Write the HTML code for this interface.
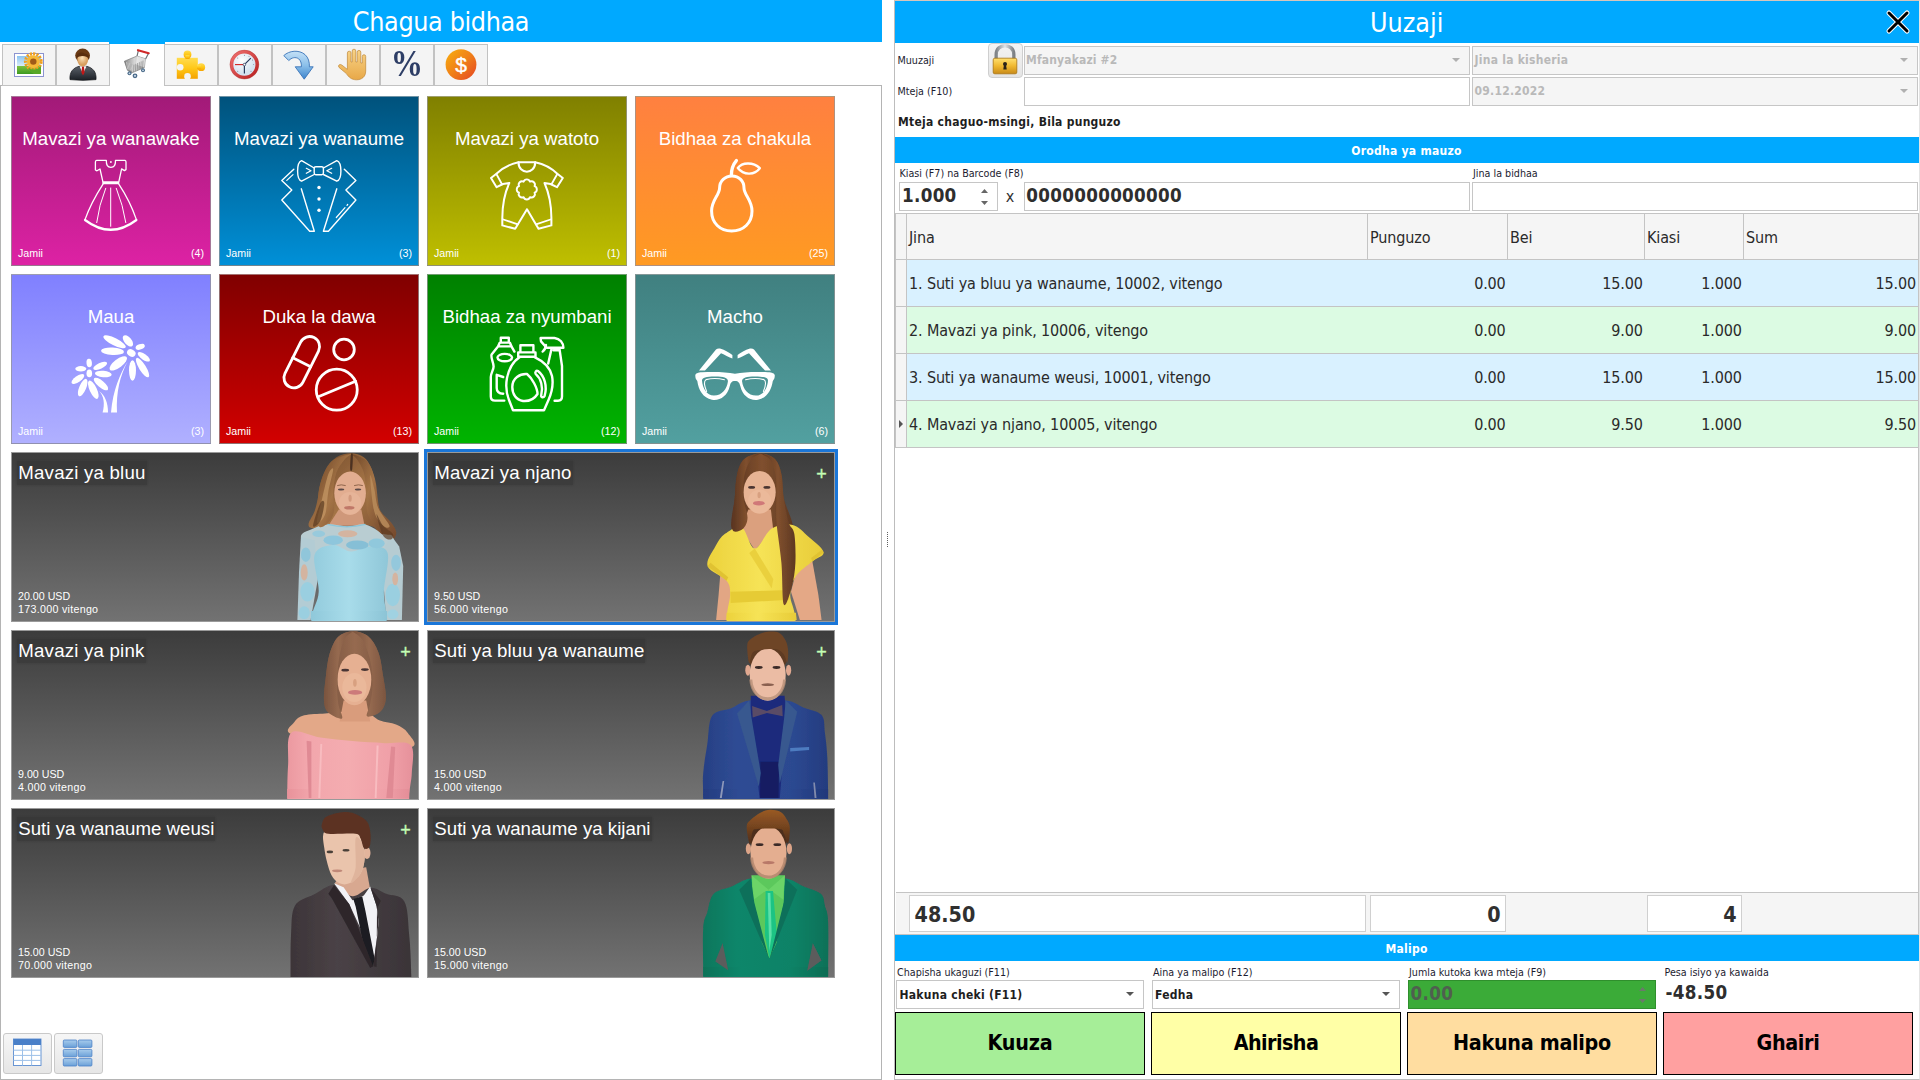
<!DOCTYPE html>
<html lang="sw"><head><meta charset="utf-8"><title>Uuzaji</title>
<style>
html,body{margin:0;padding:0;background:#fff;}
body{width:1920px;height:1080px;position:relative;overflow:hidden;font-family:"DejaVu Sans Condensed","DejaVu Sans","Liberation Sans",sans-serif;}
div{box-sizing:border-box;}
svg{position:absolute;overflow:visible;}
.tile{position:absolute;width:200px;height:170px;border:1px solid rgba(150,150,150,.75);}
.ptile{position:absolute;width:408px;height:170px;border:1px solid #9a9a9a;background:linear-gradient(#3c3c3c,#727272);overflow:hidden;}
.tab{position:absolute;top:44px;height:42px;width:54px;background:#f4f4f4;border:1px solid #c2c2c2;}
.inp{position:absolute;border:1px solid #c6c6c6;background:#fff;}
.dis{background:#f5f5f5;}
.btn{position:absolute;top:1012px;width:250px;height:63px;border:1px solid #000;}
</style></head><body>

<div style="position:absolute;left:0px;top:0px;width:882px;height:42px;background:#00a9ff;"></div>
<div style="position:absolute;top:4.27px;font-family:'DejaVu Sans Condensed','DejaVu Sans','Liberation Sans',sans-serif;font-size:26.67px;line-height:35px;color:#fff;white-space:nowrap;letter-spacing:-0.37px;left:-59px;width:1000px;text-align:center;">Chagua bidhaa</div>
<div style="position:absolute;left:0px;top:85px;width:882px;height:995px;border:1px solid #b4b4b4;background:#fff;"></div>
<div class="tab" style="left:2px"></div>
<div class="tab" style="left:56px"></div>
<div style="position:absolute;left:109px;top:42px;width:56px;height:2px;background:#00a9ff;"></div>
<div style="position:absolute;left:110px;top:44px;width:54px;height:43px;background:#fff;"></div>
<div class="tab" style="left:164px"></div>
<div class="tab" style="left:218px"></div>
<div class="tab" style="left:272px"></div>
<div class="tab" style="left:326px"></div>
<div class="tab" style="left:380px"></div>
<div class="tab" style="left:434px"></div>
<svg style="left:12px;top:50px" width="36" height="30" viewBox="12 50 36 30"><defs><linearGradient id="sky" x1="0" y1="0" x2="0" y2="1"><stop offset="0" stop-color="#8cc4f0"/><stop offset=".55" stop-color="#d8ecf8"/><stop offset=".56" stop-color="#7cc040"/><stop offset="1" stop-color="#3c9a20"/></linearGradient><radialGradient id="sun"><stop offset="0" stop-color="#8a4a10"/><stop offset=".38" stop-color="#a05a14"/><stop offset=".4" stop-color="#f8c040"/><stop offset="1" stop-color="#f09020"/></radialGradient></defs><rect x="14.5" y="53.5" width="29" height="23" fill="#fff" stroke="#8c94d0"/><rect x="17" y="56" width="24" height="18" fill="url(#sky)"/><circle cx="33.3" cy="61.6" r="7.8" fill="none" stroke="#f0a020" stroke-width="3.2" stroke-dasharray="2.2 1.1"/><circle cx="33.3" cy="61.6" r="6.4" fill="#f6b838"/><circle cx="33.3" cy="61.6" r="3.2" fill="#a05a18"/><path d="M28,68 Q30,72 34,74 H41 V66 Q36,72 28,68Z" fill="#58a828"/></svg>
<svg style="left:68px;top:46px" width="30" height="36" viewBox="68 46 30 36"><defs><linearGradient id="suit" x1="0" y1="0" x2="0" y2="1"><stop offset="0" stop-color="#5a6068"/><stop offset="1" stop-color="#1c2026"/></linearGradient><radialGradient id="face" cx=".45" cy=".35"><stop offset="0" stop-color="#fbe0b8"/><stop offset="1" stop-color="#d8a060"/></radialGradient></defs><path d="M70,79.6 C69.5,72 73,68 79,66.4 H87 C93,68 96.5,72 96,79.6 Q83,81 70,79.6Z" fill="url(#suit)" stroke="#15181c" stroke-width=".8"/><path d="M79.6,66.2 L83,74 L86.4,66.2Z" fill="#fff"/><path d="M82,66.6 H84 L84.6,72.5 L83,75.5 L81.4,72.5Z" fill="#c01818"/><ellipse cx="82.6" cy="55.6" rx="7.4" ry="7" fill="#6a3a14"/><ellipse cx="82.7" cy="60" rx="5.4" ry="6.4" fill="url(#face)"/><path d="M76.2,58 C76.5,52 82,51.5 85,53.5 C88,54 89.3,56 89.2,58.5 C87,56.5 84,55.5 81,56.2 C78.5,56.6 77,57 76.2,58Z" fill="#5a2e0e"/></svg>
<svg style="left:122px;top:48px" width="30" height="32" viewBox="122 48 30 32"><defs><linearGradient id="bk" x1="0" y1="0" x2="1" y2="0"><stop offset="0" stop-color="#8a8a8a"/><stop offset=".5" stop-color="#d8d8d8"/><stop offset="1" stop-color="#8e8e8e"/></linearGradient></defs><path d="M138.3,50.6 L137,56.4 M148.4,53.4 L145.6,59" stroke="#707478" stroke-width="1.2" fill="none"/><path d="M138,50.2 L148.7,53.2" stroke="#d02828" stroke-width="2.2" stroke-linecap="round"/><path d="M124.4,61.2 L136.8,56.1 L145.3,58.7 L144.4,67.6 L132,72.8 L127.4,70.2Z" fill="url(#bk)" stroke="#6e6e6e" stroke-width=".6"/><path d="M136.8,56.1 L145.3,58.7 L144.4,67.6 L136,64.5Z" fill="#f0f0f0" opacity=".75"/><path d="M124.4,61.2 L132.8,64 L132,72.8 L127.4,70.2Z" fill="#7c7c7c" opacity=".55"/><path d="M126.5,62.0 L127.7,69.4" stroke="#f4f4f4" stroke-width=".5"/><path d="M127.9,62.4 L129.1,69.9" stroke="#f4f4f4" stroke-width=".5"/><path d="M129.3,62.8 L130.5,70.4" stroke="#f4f4f4" stroke-width=".5"/><path d="M130.7,63.2 L131.9,70.9" stroke="#f4f4f4" stroke-width=".5"/><path d="M132.1,63.6 L133.3,71.4" stroke="#f4f4f4" stroke-width=".5"/><path d="M134.0,64.6 L133.6,72.0" stroke="#6a6a6a" stroke-width=".5"/><path d="M135.8,63.8 L135.4,71.2" stroke="#6a6a6a" stroke-width=".5"/><path d="M137.6,63.0 L137.2,70.4" stroke="#6a6a6a" stroke-width=".5"/><path d="M139.4,62.2 L139.0,69.6" stroke="#6a6a6a" stroke-width=".5"/><path d="M141.2,61.4 L140.8,68.8" stroke="#6a6a6a" stroke-width=".5"/><path d="M143.0,60.6 L142.6,68.0" stroke="#6a6a6a" stroke-width=".5"/><circle cx="129.5" cy="73.3" r="2" fill="#4a6a88"/><circle cx="129.5" cy="73.3" r="0.9" fill="#c8d8e8"/><circle cx="135" cy="75.8" r="2.4" fill="#4a6a88"/><circle cx="135" cy="75.8" r="1.1" fill="#c8d8e8"/><circle cx="143" cy="70.3" r="2" fill="#4a6a88"/><circle cx="143" cy="70.3" r="0.9" fill="#c8d8e8"/></svg>
<svg style="left:170px;top:46px" width="40" height="40" viewBox="170 46 40 40"><defs><linearGradient id="pz" x1="0" y1="0" x2="0" y2="1"><stop offset="0" stop-color="#ffdc50"/><stop offset=".5" stop-color="#ffc818"/><stop offset="1" stop-color="#f4a200"/></linearGradient><mask id="pzm"><rect x="170" y="46" width="40" height="40" fill="#fff"/><circle cx="180.2" cy="67.2" r="3.3" fill="#000"/><circle cx="187.5" cy="76.4" r="3.3" fill="#000"/></mask></defs><g mask="url(#pzm)" fill="url(#pz)"><rect x="176.8" y="57.8" width="21" height="21"/><circle cx="187.5" cy="54.4" r="3.9"/><rect x="185.4" y="55" width="4.2" height="4"/><circle cx="201.2" cy="67.2" r="3.9"/><rect x="197" y="65.1" width="4" height="4.2"/></g></svg>
<svg style="left:228px;top:48px" width="34" height="34" viewBox="228 48 34 34"><defs><radialGradient id="ck" cx=".4" cy=".35"><stop offset="0" stop-color="#ffffff"/><stop offset="1" stop-color="#d4e2f0"/></radialGradient><linearGradient id="ckr" x1="0" y1="0" x2="1" y2="1"><stop offset="0" stop-color="#f07070"/><stop offset="1" stop-color="#b82020"/></linearGradient></defs><circle cx="244.4" cy="64.6" r="12.8" fill="url(#ck)" stroke="url(#ckr)" stroke-width="3.4"/><circle cx="244.4" cy="64.6" r="14.5" fill="none" stroke="#a02828" stroke-width=".5" opacity=".6"/><path d="M244.4,64.6 H235" stroke="#d02020" stroke-width="1.1"/><path d="M244.4,64.6 L250.8,58.2 M244.4,64.6 V73.6" stroke="#283a5c" stroke-width="1.2"/><circle cx="244.4" cy="64.6" r="1.3" fill="#fff" stroke="#283a5c" stroke-width=".7"/><circle cx="244.4" cy="55.3" r=".45" fill="#445"/><circle cx="253.7" cy="64.6" r=".45" fill="#445"/><circle cx="237.8" cy="58.0" r=".45" fill="#445"/><circle cx="251.0" cy="71.2" r=".45" fill="#445"/><circle cx="237.8" cy="71.2" r=".45" fill="#445"/><circle cx="249.0" cy="56.6" r=".45" fill="#445"/><circle cx="252.4" cy="60.0" r=".45" fill="#445"/></svg>
<svg style="left:280px;top:46px" width="38" height="38" viewBox="280 46 38 38"><defs><linearGradient id="ar" x1="0" y1="0" x2="0" y2="1"><stop offset="0" stop-color="#c4e0f6"/><stop offset=".5" stop-color="#8cc0ea"/><stop offset="1" stop-color="#3c84cc"/></linearGradient></defs><path d="M283.8,55.6 C289,50.6 299,49.4 305,54.6 C308.4,57.6 309.6,62 309.4,66.8 H313.2 L304.2,79.2 L295.2,66.8 H301.4 C301.6,63 300.6,60.4 298.6,58.8 C295.6,56.6 291.4,57.6 288.8,60.6Z" fill="url(#ar)" stroke="#3a74b8" stroke-width=".9" stroke-linejoin="round"/></svg>
<svg style="left:336px;top:46px" width="34" height="36" viewBox="336 46 34 36"><defs><linearGradient id="hd" x1="0" y1="0" x2="0" y2="1"><stop offset="0" stop-color="#f8d488"/><stop offset="1" stop-color="#e8a848"/></linearGradient></defs><g fill="url(#hd)" stroke="#c08838" stroke-width=".7" stroke-linejoin="round"><path d="M347.4,66 V53 Q347.4,51.2 349.2,51.2 Q351,51.2 351,53 V62 H352.2 V51 Q352.2,49.2 354,49.2 Q355.8,49.2 355.8,51 V62 H357.2 V52.2 Q357.2,50.4 359,50.4 Q360.8,50.4 360.8,52.2 V63 H362.3 V56.4 Q362.3,54.7 364,54.7 Q365.7,54.7 365.7,56.4 V71 C365.7,77 361.5,79.8 356.5,79.8 C351.5,79.8 348.6,77 346.4,73.6 L339,67.4 Q337.8,65.8 339.2,64.8 Q340.6,64 342,65.2 L347.4,69.4Z"/></g></svg>
<div style="position:absolute;left:387px;top:43px;width:40px;height:42px;font-family:'Liberation Serif','DejaVu Serif',serif;font-weight:bold;font-size:37.5px;line-height:42px;color:#2e3e66;text-align:center;transform:scaleX(.86);">%</div>
<svg style="left:444px;top:48px" width="34" height="34" viewBox="444 48 34 34"><defs><linearGradient id="dl" x1="0" y1="0" x2="1" y2="1"><stop offset="0" stop-color="#f8b010"/><stop offset=".5" stop-color="#f08018"/><stop offset="1" stop-color="#e44424"/></linearGradient></defs><circle cx="461" cy="64.6" r="15.4" fill="url(#dl)"/></svg>
<div style="position:absolute;left:446px;top:50px;width:30px;height:30px;font-family:'Liberation Sans',sans-serif;font-weight:normal;font-size:21px;line-height:30px;color:#fff;text-align:center;-webkit-text-stroke:.4px #fff;">$</div>
<div class="tile" style="left:11px;top:96px;background:linear-gradient(#a21a78,#dd22a4)"></div>
<div style="position:absolute;top:127.03px;font-family:'Liberation Sans','DejaVu Sans',sans-serif;font-size:18.67px;line-height:24px;color:#fff;white-space:nowrap;left:-389px;width:1000px;text-align:center;">Mavazi ya wanawake</div>
<div style="position:absolute;top:246.30px;font-family:'Liberation Sans','DejaVu Sans',sans-serif;font-size:10.67px;line-height:14px;color:#fff;white-space:nowrap;left:18px;">Jamii</div>
<div style="position:absolute;top:246.30px;font-family:'Liberation Sans','DejaVu Sans',sans-serif;font-size:10.67px;line-height:14px;color:#fff;white-space:nowrap;right:1716px;text-align:right;">(4)</div>
<div class="tile" style="left:219px;top:96px;background:linear-gradient(#00527c,#0090d8)"></div>
<div style="position:absolute;top:127.03px;font-family:'Liberation Sans','DejaVu Sans',sans-serif;font-size:18.67px;line-height:24px;color:#fff;white-space:nowrap;left:-181px;width:1000px;text-align:center;">Mavazi ya wanaume</div>
<div style="position:absolute;top:246.30px;font-family:'Liberation Sans','DejaVu Sans',sans-serif;font-size:10.67px;line-height:14px;color:#fff;white-space:nowrap;left:226px;">Jamii</div>
<div style="position:absolute;top:246.30px;font-family:'Liberation Sans','DejaVu Sans',sans-serif;font-size:10.67px;line-height:14px;color:#fff;white-space:nowrap;right:1508px;text-align:right;">(3)</div>
<div class="tile" style="left:427px;top:96px;background:linear-gradient(#808000,#bfbf00)"></div>
<div style="position:absolute;top:127.03px;font-family:'Liberation Sans','DejaVu Sans',sans-serif;font-size:18.67px;line-height:24px;color:#fff;white-space:nowrap;left:27px;width:1000px;text-align:center;">Mavazi ya watoto</div>
<div style="position:absolute;top:246.30px;font-family:'Liberation Sans','DejaVu Sans',sans-serif;font-size:10.67px;line-height:14px;color:#fff;white-space:nowrap;left:434px;">Jamii</div>
<div style="position:absolute;top:246.30px;font-family:'Liberation Sans','DejaVu Sans',sans-serif;font-size:10.67px;line-height:14px;color:#fff;white-space:nowrap;right:1300px;text-align:right;">(1)</div>
<div class="tile" style="left:635px;top:96px;background:linear-gradient(#ff8040,#ff9a22)"></div>
<div style="position:absolute;top:127.03px;font-family:'Liberation Sans','DejaVu Sans',sans-serif;font-size:18.67px;line-height:24px;color:#fff;white-space:nowrap;left:235px;width:1000px;text-align:center;">Bidhaa za chakula</div>
<div style="position:absolute;top:246.30px;font-family:'Liberation Sans','DejaVu Sans',sans-serif;font-size:10.67px;line-height:14px;color:#fff;white-space:nowrap;left:642px;">Jamii</div>
<div style="position:absolute;top:246.30px;font-family:'Liberation Sans','DejaVu Sans',sans-serif;font-size:10.67px;line-height:14px;color:#fff;white-space:nowrap;right:1092px;text-align:right;">(25)</div>
<div class="tile" style="left:11px;top:274px;background:linear-gradient(#8080ff,#b0b0ff)"></div>
<div style="position:absolute;top:305.03px;font-family:'Liberation Sans','DejaVu Sans',sans-serif;font-size:18.67px;line-height:24px;color:#fff;white-space:nowrap;left:-389px;width:1000px;text-align:center;">Maua</div>
<div style="position:absolute;top:424.30px;font-family:'Liberation Sans','DejaVu Sans',sans-serif;font-size:10.67px;line-height:14px;color:#fff;white-space:nowrap;left:18px;">Jamii</div>
<div style="position:absolute;top:424.30px;font-family:'Liberation Sans','DejaVu Sans',sans-serif;font-size:10.67px;line-height:14px;color:#fff;white-space:nowrap;right:1716px;text-align:right;">(3)</div>
<div class="tile" style="left:219px;top:274px;background:linear-gradient(#800000,#d20000)"></div>
<div style="position:absolute;top:305.03px;font-family:'Liberation Sans','DejaVu Sans',sans-serif;font-size:18.67px;line-height:24px;color:#fff;white-space:nowrap;left:-181px;width:1000px;text-align:center;">Duka la dawa</div>
<div style="position:absolute;top:424.30px;font-family:'Liberation Sans','DejaVu Sans',sans-serif;font-size:10.67px;line-height:14px;color:#fff;white-space:nowrap;left:226px;">Jamii</div>
<div style="position:absolute;top:424.30px;font-family:'Liberation Sans','DejaVu Sans',sans-serif;font-size:10.67px;line-height:14px;color:#fff;white-space:nowrap;right:1508px;text-align:right;">(13)</div>
<div class="tile" style="left:427px;top:274px;background:linear-gradient(#008000,#00b400)"></div>
<div style="position:absolute;top:305.03px;font-family:'Liberation Sans','DejaVu Sans',sans-serif;font-size:18.67px;line-height:24px;color:#fff;white-space:nowrap;left:27px;width:1000px;text-align:center;">Bidhaa za nyumbani</div>
<div style="position:absolute;top:424.30px;font-family:'Liberation Sans','DejaVu Sans',sans-serif;font-size:10.67px;line-height:14px;color:#fff;white-space:nowrap;left:434px;">Jamii</div>
<div style="position:absolute;top:424.30px;font-family:'Liberation Sans','DejaVu Sans',sans-serif;font-size:10.67px;line-height:14px;color:#fff;white-space:nowrap;right:1300px;text-align:right;">(12)</div>
<div class="tile" style="left:635px;top:274px;background:linear-gradient(#408080,#52a0a0)"></div>
<div style="position:absolute;top:305.03px;font-family:'Liberation Sans','DejaVu Sans',sans-serif;font-size:18.67px;line-height:24px;color:#fff;white-space:nowrap;left:235px;width:1000px;text-align:center;">Macho</div>
<div style="position:absolute;top:424.30px;font-family:'Liberation Sans','DejaVu Sans',sans-serif;font-size:10.67px;line-height:14px;color:#fff;white-space:nowrap;left:642px;">Jamii</div>
<div style="position:absolute;top:424.30px;font-family:'Liberation Sans','DejaVu Sans',sans-serif;font-size:10.67px;line-height:14px;color:#fff;white-space:nowrap;right:1092px;text-align:right;">(6)</div>
<svg style="left:60px;top:150px" width="100" height="90" viewBox="0 0 100 90"><path d="M36.6,10.3 H46.3 C46.2,15 47.6,17.3 50.9,17.3 C54.2,17.3 55.6,15 55.5,10.3 H65 Q66,10.5 66,12 V19.6 L64.4,20.6 L61.6,18.9 L58.9,31.3 M36.6,10.3 Q35.4,10.5 35.4,12 V20 L37,20.8 L40,19 L42.8,31.3" fill="none" stroke="#fff" stroke-width="1.3" stroke-linecap="round" stroke-linejoin="round" /><rect x="42.3" y="31.2" width="17" height="3" rx=".8" fill="#fff"/><path d="M43,34.2 C38,42 29.5,57 25,69.6 M58.8,34.2 C64,42 72,57 76.4,69.6" fill="none" stroke="#fff" stroke-width="1.3" stroke-linecap="round" stroke-linejoin="round" /><path d="M25,70 Q50.8,89.5 76.4,70" fill="none" stroke="#fff" stroke-width="2.2" stroke-linecap="round" stroke-linejoin="round" /><path d="M45.7,38.3 Q39,55 36.7,72.6 M50.7,38 V76.3 M56.3,38.3 Q63,55 65.8,72.6" fill="none" stroke="#fff" stroke-width="1" stroke-linecap="round" stroke-linejoin="round" /><circle cx="50.9" cy="12" r=".9" fill="#fff"/></svg>
<svg style="left:268px;top:150px" width="100" height="90" viewBox="0 0 100 90"><path d="M46.2,18 L33.6,10.6 Q29.6,12 29.6,21 Q29.6,30 33.6,31.2 L46.2,24.5 M55.4,18 L68.8,10.6 Q72.9,12 72.9,21 Q72.9,30 68.8,31.2 L55.4,24.5" fill="none" stroke="#fff" stroke-width="1.4" stroke-linecap="round" stroke-linejoin="round" /><rect x="46.2" y="16.7" width="9.2" height="8" rx="1.6" fill="none" stroke="#fff" stroke-width="1.4" stroke-linecap="round" stroke-linejoin="round" /><path d="M38.3,18.3 L43,20.7 L38.3,23.3 M63.7,18.3 L58.8,20.7 L63.7,23.3" fill="none" stroke="#fff" stroke-width="1.2" stroke-linecap="round" stroke-linejoin="round" /><path d="M25.8,19.2 L13.8,30.4 L23.8,40 L13.8,50 L41.7,81.3 L46.3,81.3 L33.3,38.8 M76.3,19.2 L87.9,30.4 L77.9,40 L87.9,50 L60.4,81.3 L55.4,81.3 L68.8,38.8" fill="none" stroke="#fff" stroke-width="1.4" stroke-linecap="round" stroke-linejoin="round" /><path d="M25,24.6 L18.8,30.4 M68.3,67.5 L77,57.6 M79,55.3 L79.7,54.5" fill="none" stroke="#fff" stroke-width="1.2" stroke-linecap="round" stroke-linejoin="round" /><circle cx="51" cy="37.5" r="1.7" fill="#fff"/><circle cx="51" cy="49" r="1.7" fill="#fff"/><circle cx="51" cy="60.2" r="1.7" fill="#fff"/></svg>
<svg style="left:476px;top:150px" width="100" height="90" viewBox="0 0 100 90"><path d="M42.5,12.3 C42.5,24.8 59.2,24.8 59.2,12.3" fill="none" stroke="#fff" stroke-width="2.1" stroke-linecap="round" stroke-linejoin="round" /><path d="M42.5,12.2 H59.2 C68,14 76,18.5 81.3,23.8 L86.8,28 L81,37.2 L74.5,34 L68.5,33 C72.5,42 75.5,56 75.4,69.2 V75.4 L62.5,78.8 L51,59.2 L39.2,78.8 L26.3,75.4 V69.2 C26.2,56 29.2,42 33.3,33 L27,34 L20.6,37.2 L15,28 L20.4,23.8 C26,18.5 34,14 42.5,12.2 Z" fill="none" stroke="#fff" stroke-width="2.0" stroke-linecap="round" stroke-linejoin="round" /><path d="M20.4,24 L26,34.3 M81.3,24 L75.5,34.3 M27.3,69.5 L41.8,74.3 M74.5,69.5 L60,74.3" fill="none" stroke="#fff" stroke-width="1.8" stroke-linecap="round" stroke-linejoin="round" /><path d="M47.59,31.64A3.4,3.4 0 0 1 54.01,31.64A3.4,3.4 0 0 1 58.56,36.19A3.4,3.4 0 0 1 58.56,42.61A3.4,3.4 0 0 1 54.01,47.16A3.4,3.4 0 0 1 47.59,47.16A3.4,3.4 0 0 1 43.04,42.61A3.4,3.4 0 0 1 43.04,36.19A3.4,3.4 0 0 1 47.59,31.64Z" fill="none" stroke="#fff" stroke-width="1.9" stroke-linecap="round" stroke-linejoin="round" /></svg>
<svg style="left:684px;top:150px" width="100" height="90" viewBox="0 0 100 90"><path d="M48,26 C41,26 35.6,31 35.6,38 C35.6,45 27.6,50 27.6,61 C27.6,73 36,81 47.6,81 C59.5,81 68,73 68,61 C68,50 60,45 60,38 C60,31 55,26 48,26 Z" fill="none" stroke="#fff" stroke-width="3" stroke-linecap="round" stroke-linejoin="round" /><path d="M47.4,25 C47.4,19 49.5,14 52.4,10.6" fill="none" stroke="#fff" stroke-width="3.3" stroke-linecap="round" stroke-linejoin="round" /><path d="M53.8,18 C58,12.3 69,11.5 75.8,18.2 C71,24.8 60,26 53.8,18 Z" fill="none" stroke="#fff" stroke-width="2.4" stroke-linecap="round" stroke-linejoin="round" /></svg>
<svg style="left:60px;top:328px" width="100" height="90" viewBox="0 0 100 90"><ellipse cx="54.6" cy="13.8" rx="12.4" ry="3.6" transform="rotate(26.6 54.6 13.8)" fill="#fff"/><ellipse cx="67.9" cy="12.9" rx="6.8" ry="3.6" transform="rotate(50 67.9 12.9)" fill="#fff"/><ellipse cx="80.2" cy="18.8" rx="4.8" ry="2.6" transform="rotate(-20 80.2 18.8)" fill="#fff"/><ellipse cx="83.8" cy="28.8" rx="7.2" ry="2.9" transform="rotate(35 83.8 28.8)" fill="#fff"/><ellipse cx="82.5" cy="39.6" rx="11.3" ry="3.4" transform="rotate(58 82.5 39.6)" fill="#fff"/><ellipse cx="72.5" cy="42.5" rx="10.2" ry="3.5" transform="rotate(90 72.5 42.5)" fill="#fff"/><ellipse cx="58.3" cy="35.4" rx="10.5" ry="4.2" transform="rotate(143 58.3 35.4)" fill="#fff"/><ellipse cx="52.5" cy="23.3" rx="11.5" ry="3.7" transform="rotate(3 52.5 23.3)" fill="#fff"/><ellipse cx="71.3" cy="25" rx="4.5" ry="3.5" transform="rotate(30 71.3 25)" fill="#fff"/><ellipse cx="29.2" cy="35" rx="4.2" ry="2.7" transform="rotate(85 29.2 35)" fill="#fff"/><ellipse cx="40.2" cy="37.9" rx="7.5" ry="2.9" transform="rotate(-25 40.2 37.9)" fill="#fff"/><ellipse cx="43.3" cy="46" rx="8.4" ry="3.2" transform="rotate(5 43.3 46)" fill="#fff"/><ellipse cx="41" cy="56" rx="9" ry="3.4" transform="rotate(40 41 56)" fill="#fff"/><ellipse cx="33.3" cy="61.7" rx="10" ry="3.6" transform="rotate(65 33.3 61.7)" fill="#fff"/><ellipse cx="22.7" cy="59.6" rx="9.4" ry="3.4" transform="rotate(113 22.7 59.6)" fill="#fff"/><ellipse cx="17.9" cy="51" rx="7.5" ry="3.1" transform="rotate(145 17.9 51)" fill="#fff"/><ellipse cx="20.8" cy="40.8" rx="5.5" ry="2.7" transform="rotate(0 20.8 40.8)" fill="#fff"/><ellipse cx="29.3" cy="45.4" rx="2.8" ry="3.8" transform="rotate(0 29.3 45.4)" fill="#fff"/><path d="M67.6,33.5 C60,46 53,62 51,84.6 L57,84.6 C56,64 60,48 67.6,33.5 Z M39,63 C44,68 45,76 42.6,84.6 L48,84.6 C48,75 45,67 39,63 Z" fill="#fff"/></svg>
<svg style="left:268px;top:328px" width="100" height="90" viewBox="0 0 100 90"><g transform="rotate(26.6 33.75 34.2)"><rect x="23.75" y="6.7" width="20" height="55" rx="10" fill="none" stroke="#fff" stroke-width="2.8" stroke-linecap="round" stroke-linejoin="round" /><path d="M23.75,34.2 H43.75" fill="none" stroke="#fff" stroke-width="2.8" stroke-linecap="round" stroke-linejoin="round" /></g><circle cx="76" cy="21.5" r="10.3" fill="none" stroke="#fff" stroke-width="2.8" stroke-linecap="round" stroke-linejoin="round" /><circle cx="68.75" cy="61.7" r="20.5" fill="none" stroke="#fff" stroke-width="2.8" stroke-linecap="round" stroke-linejoin="round" /><path d="M50.3,68.7 L87.6,53.3" fill="none" stroke="#fff" stroke-width="2.8" stroke-linecap="round" stroke-linejoin="round" /></svg>
<svg style="left:476px;top:328px" width="100" height="90" viewBox="0 0 100 90"><path d="M24.8,14.4 V9.7 H32.8 V14.4 M23.8,14.6 H33.8 L35.6,18.4 H22 Z M22,18.6 L15.6,26.5 C14.5,30 17.6,34 17.6,38.5 C17.6,42 14.8,45 14.8,49 V68.5 Q14.8,72.6 19,72.6 H28.3 M35.6,18.6 L38.4,23.6" fill="none" stroke="#fff" stroke-width="2.4" stroke-linecap="round" stroke-linejoin="round" /><ellipse cx="28.75" cy="29.6" rx="7.3" ry="3.7" fill="none" stroke="#fff" stroke-width="2.4" stroke-linecap="round" stroke-linejoin="round" /><path d="M27.2,49 L20.7,46.8 V60 Q20.7,65.4 27.2,65.8" fill="none" stroke="#fff" stroke-width="2.4" stroke-linecap="round" stroke-linejoin="round" /><path d="M44.4,23.2 V17.2 H57.4 V23.2 M42.2,24.4 H59.5 V28.8 H42.2 Z" fill="none" stroke="#fff" stroke-width="2.4" stroke-linecap="round" stroke-linejoin="round" /><path d="M43.5,29.3 C38,33 33,40 31,50 C29.5,58 30.6,66 33,72 L37,82.3 H68 L72.5,72 C76,64 77.6,56 76,48 C74,39 67,33 59,29.3" fill="none" stroke="#fff" stroke-width="2.4" stroke-linecap="round" stroke-linejoin="round" /><path d="M36.3,59 C36.3,50 44,45.5 51,46 C56,50 61.5,60 61.5,66 C58,71.5 52,73.4 47,73 C40,72 36.3,66 36.3,59 Z" fill="none" stroke="#fff" stroke-width="2.4" stroke-linecap="round" stroke-linejoin="round" /><path d="M62,43 C68.5,48 71.5,58 68.6,68 C67.6,70 64.6,69.6 65.2,67.2 C67.4,59 65,50.5 59.8,46.2 C58.4,44 60.4,42 62,43 Z" fill="none" stroke="#fff" stroke-width="2.4" stroke-linecap="round" stroke-linejoin="round" /><path d="M64.6,10 H78.5 C84,10.5 87.4,15 87.4,19.8 H70.6 L65,13.4 Z" fill="none" stroke="#fff" stroke-width="2.4" stroke-linecap="round" stroke-linejoin="round" /><path d="M70,17 C69.6,20 68.5,22.2 66.6,23.6" fill="none" stroke="#fff" stroke-width="2.4" stroke-linecap="round" stroke-linejoin="round" /><path d="M77.6,22.2 H82.6 M75.6,20.4 L72.2,35.6 M83.4,20.4 L86,38 V68.6 Q86,72.7 82,72.7 H78.6" fill="none" stroke="#fff" stroke-width="2.4" stroke-linecap="round" stroke-linejoin="round" /></svg>
<svg style="left:684px;top:328px" width="100" height="90" viewBox="0 0 100 90"><path d="M11.3,47.5 C11.3,45.5 14,44.5 18,44.3 C30,43.5 42,44 51,45.8 C60,44 72,43.5 84,44.3 C88,44.5 90.8,45.5 90.8,47.5 C90.8,50 90,51.5 88.8,53 C87.5,62 83,70 74,71.8 C66,73 58.5,68 56.3,58 C55.5,55 54.5,53 51,53 C47.5,53 46.5,55 45.8,58 C43.5,68 36,73 28,71.8 C19,70 14.5,62 13.3,53 C12,51.5 11.3,50 11.3,47.5 Z M18,52.5 C18,49.5 22,48.4 31,48.4 C40,48.4 44.4,50 43.9,53.5 C43,61 38,67.6 30,67.6 C22.5,67.6 18.5,60 18,52.5 Z M84,52.5 C84,49.5 80,48.4 71,48.4 C62,48.4 57.6,50 58.1,53.5 C59,61 64,67.6 72,67.6 C79.5,67.6 83.5,60 84,52.5 Z" fill="#fff" fill-rule="evenodd"/><path d="M22.6,63.5 C20.4,58 19.8,53 22,51.6 C27,50.4 35,50.4 40.4,51.8" fill="none" stroke="#fff" stroke-width="1.1" stroke-linecap="round" stroke-linejoin="round" /><path d="M79.4,63.5 C81.6,58 82.2,53 80,51.6 C75,50.4 67,50.4 61.6,51.8" fill="none" stroke="#fff" stroke-width="1.1" stroke-linecap="round" stroke-linejoin="round" /><path d="M15,42.6 L32,21.6 Q33.6,20 36,20.5 C41,22 45.5,24.5 48.4,27 L48.4,30.6 C44,28.8 40,26.4 37,25.2 L21,42.5 Z M87,42.6 L70,21.6 Q68.4,20 66,20.5 C61,22 56.5,24.5 53.6,27 L53.6,30.6 C58,28.8 62,26.4 65,25.2 L81,42.5 Z" fill="#fff"/></svg>
<div class="ptile" style="left:11px;top:452px"><svg style="left:0;top:0" width="406" height="168" viewBox="12 453 406 168"><defs><linearGradient id="h0" x1="0" y1="0" x2="1" y2="1"><stop offset="0" stop-color="#6e4628"/><stop offset=".5" stop-color="#a47446"/><stop offset="1" stop-color="#74492c"/></linearGradient><linearGradient id="d0" x1="0" y1="0" x2="1" y2="0"><stop offset="0" stop-color="#8fc8da"/><stop offset=".5" stop-color="#a8dcea"/><stop offset="1" stop-color="#8cc4d6"/></linearGradient></defs><filter id="bl11_452" x="-5%" y="-5%" width="110%" height="130%"><feGaussianBlur stdDeviation=".45"/></filter><g filter="url(#bl11_452)"><path d="M350.9,453.2C346.3,453.2 340.6,454.5 336.4,457.2C332.2,459.9 328.6,464.9 325.9,469.3C323.2,473.7 321.6,479.0 320.3,483.8C319.0,488.6 318.8,493.7 317.9,498.3C316.9,502.9 316.1,507.0 314.6,511.2C313.1,515.4 309.2,520.5 308.7,523.3C308.2,526.1 308.9,527.6 311.4,528.1C313.9,528.6 319.9,526.9 323.5,526.5C327.1,526.1 325.4,525.8 333.2,525.7C341.0,525.6 362.7,524.4 370.2,525.7C377.7,527.1 375.9,531.4 378.3,533.8C380.7,536.2 382.3,539.1 384.7,540.2C387.1,541.3 390.9,541.5 392.8,540.2C394.7,538.9 396.6,535.2 396.3,532.2C396.0,529.2 393.7,526.0 391.1,522.5C388.5,519.0 383.1,515.2 380.7,511.2C378.3,507.2 377.6,503.1 376.6,498.3C375.7,493.5 375.9,487.3 375.0,482.2C374.1,477.1 372.9,471.9 371.0,467.7C369.1,463.5 367.2,459.6 363.8,457.2C360.4,454.8 355.5,453.2 350.9,453.2Z" fill="url(#h0)" /><polygon points="338.8,509.6 361.3,509.6 364.6,525.7 328.3,525.7" fill="#cf987a" /><path d="M327.5,524.4C333.4,524.0 341.4,526.5 347.7,526.5C354.0,526.5 359.5,523.2 365.4,524.4C371.3,525.6 378.5,531.7 383.1,533.8C387.7,535.9 391.5,533.2 392.8,537.0C394.1,540.8 398.1,553.6 391.1,556.3C384.1,559.0 363.6,553.1 350.9,553.1C338.1,553.1 322.9,559.0 314.6,556.3C306.3,553.6 301.3,541.6 300.9,537.0C300.5,532.4 307.8,531.0 312.2,528.9C316.6,526.8 321.6,524.8 327.5,524.4Z" fill="#b9cdd2" /><polygon points="300.9,537.0 314.6,540.2 317.9,578.9 310.6,619.9 297.4,619.9 299.0,572.4" fill="#b3ccd4" /><polygon points="391.1,535.4 399.2,546.6 403.2,566.0 401.9,619.9 386.3,619.9 383.1,578.9 385.5,546.6" fill="#b6ccd2" /><path d="M314.6,554.7C317.0,546.9 327.1,545.5 333.2,545.0C339.2,544.5 344.7,551.2 350.9,551.5C357.1,551.8 364.1,546.3 370.2,546.6C376.3,546.9 385.3,545.6 387.6,553.1C389.9,560.6 384.1,580.7 383.9,591.8C383.7,602.9 386.1,605.9 386.6,619.9C387.1,633.9 399.7,666.2 387.1,675.5C374.5,684.8 323.5,684.8 310.9,675.5C298.3,666.2 310.1,633.9 311.4,619.9C312.7,605.9 318.2,602.7 318.7,591.8C319.2,580.9 312.2,562.5 314.6,554.7Z" fill="url(#d0)" /><polygon points="310.9,611.1 387.1,611.1 387.1,619.9 310.9,619.9" fill="url(#d0)" /><ellipse cx="333.2" cy="540.2" rx="9.7" ry="4.8" fill="#8ec6dc" /><ellipse cx="357.3" cy="545.0" rx="11.3" ry="4.5" fill="#86bfd6" /><ellipse cx="376.6" cy="543.4" rx="8.1" ry="4.8" fill="#90c8dc" /><ellipse cx="305.8" cy="554.7" rx="4.8" ry="7.2" fill="#90c6da" /><ellipse cx="307.4" cy="591.8" rx="7.2" ry="9.7" fill="#9acfe0" /><ellipse cx="304.2" cy="612.7" rx="5.6" ry="6.4" fill="#9acfe0" /><ellipse cx="392.8" cy="595.0" rx="7.2" ry="11.3" fill="#9acfe0" /><ellipse cx="396.0" cy="562.8" rx="4.8" ry="8.1" fill="#94c8dc" /><ellipse cx="392.8" cy="614.3" rx="5.6" ry="4.8" fill="#a0d2e2" /><ellipse cx="318.7" cy="533.8" rx="6.4" ry="3.2" fill="#98cadc" /><ellipse cx="304.2" cy="572.4" rx="3.5" ry="8.1" fill="#d4b4a0" /><ellipse cx="395.2" cy="578.9" rx="2.9" ry="6.4" fill="#d4b4a0" /><ellipse cx="347.7" cy="533.8" rx="9.7" ry="3.5" fill="#d4b4a0" /><path d="M327.5,524.4 Q346.8,529.3 365.4,524.4" fill="none" stroke="#8cc6da" stroke-width="1.3"/><ellipse cx="350.1" cy="493.2" rx="15.8" ry="21.7" fill="#e2ad90" /><ellipse cx="350.1" cy="503.2" rx="11.3" ry="11.3" fill="#e6b498" /><path d="M350.9,454.0C353.0,453.7 346.8,456.6 344.4,459.7C342.0,462.8 338.3,467.2 336.4,472.6C334.5,478.0 333.6,485.5 333.2,491.9C332.8,498.3 334.8,506.1 334.0,511.2C333.2,516.3 330.9,520.1 328.3,522.5C325.8,524.9 320.4,529.7 318.7,525.7C317.0,521.7 317.4,506.1 317.9,498.3C318.4,490.5 319.6,485.2 321.9,479.0C324.2,472.8 326.7,465.5 331.5,461.3C336.3,457.1 348.8,454.3 350.9,454.0Z" fill="url(#h0)" /><path d="M351.7,454.0C350.1,453.7 355.3,456.6 357.3,459.7C359.3,462.8 362.3,467.2 363.8,472.6C365.3,478.0 365.7,485.5 366.2,491.9C366.7,498.3 365.9,506.1 367.0,511.2C368.1,516.3 369.9,518.7 372.6,522.5C375.3,526.3 382.2,537.0 383.1,533.8C384.1,530.6 379.7,512.3 378.3,503.2C376.9,494.1 376.9,486.0 375.0,479.0C373.1,472.0 370.9,465.5 367.0,461.3C363.1,457.1 353.3,454.3 351.7,454.0Z" fill="url(#h0)" /><ellipse cx="341.2" cy="489.5" rx="3.2" ry="1.1" fill="#5a4a48" /><ellipse cx="358.1" cy="489.5" rx="3.2" ry="1.1" fill="#5a4a48" /><ellipse cx="349.3" cy="507.7" rx="5.2" ry="1.8" fill="#c07868" /><ellipse cx="350.1" cy="498.3" rx="1.6" ry="3.5" fill="#d29a7e" /><path d="M328.3,474.2C330.1,469.4 333.2,466.4 333.2,469.3C333.2,472.2 329.6,484.4 328.3,491.9C327.0,499.4 327.0,509.3 325.1,514.4C323.2,519.5 317.5,525.2 317.0,522.5C316.5,519.8 320.3,506.4 322.2,498.3C324.1,490.2 326.5,479.0 328.3,474.2Z" fill="#c09462" opacity=".8"/><path d="M370.2,475.8C370.2,472.1 372.8,483.3 374.2,488.7C375.6,494.1 375.8,501.8 378.3,508.0C380.9,514.2 388.7,522.8 389.5,525.7C390.3,528.7 385.7,528.1 383.1,525.7C380.6,523.3 376.4,519.5 374.2,511.2C372.0,502.9 370.2,479.6 370.2,475.8Z" fill="#bc8e5c" opacity=".8"/><path d="M350.9,454.8C351.3,452.4 352.6,452.4 352.8,454.8C353.0,457.2 352.6,466.9 352.2,469.3C351.8,471.7 350.4,471.7 350.2,469.3C350.0,466.9 350.5,457.2 350.9,454.8Z" fill="#4c3020" /><path d="M320.3,503.2C322.2,499.4 324.3,500.2 324.3,503.2C324.3,506.1 322.2,517.1 320.3,520.9C318.4,524.6 313.0,528.7 313.0,525.7C313.0,522.8 318.4,506.9 320.3,503.2Z" fill="#5a3a22" opacity=".7"/><path d="M376.6,514.4C376.6,512.8 380.4,522.5 383.1,525.7C385.8,528.9 391.5,531.5 392.8,533.8C394.1,536.1 392.7,539.1 391.1,539.4C389.5,539.7 385.5,539.6 383.1,535.4C380.7,531.2 376.6,516.0 376.6,514.4Z" fill="#5e3c24" opacity=".7"/><path d="M337.2,485.6 Q341.2,484.1 345.7,485.6 M354.1,485.6 Q358.6,484.1 362.8,485.6" stroke="#7a5238" stroke-width=".8" fill="none"/></g></svg></div>
<div style="position:absolute;top:460.53px;font-family:'Liberation Sans','DejaVu Sans',sans-serif;font-size:18.67px;line-height:24px;color:#fff;white-space:nowrap;letter-spacing:0.2px;left:18.3px;background:rgba(40,40,40,.3);box-shadow:0 0 2px rgba(40,40,40,.3);padding:0 1px;margin-left:-1px;">Mavazi ya bluu</div>
<div style="position:absolute;top:588.80px;font-family:'Liberation Sans','DejaVu Sans',sans-serif;font-size:10.67px;line-height:14px;color:#fff;white-space:nowrap;left:18px;">20.00 USD</div>
<div style="position:absolute;top:601.80px;font-family:'Liberation Sans','DejaVu Sans',sans-serif;font-size:10.67px;line-height:14px;color:#fff;white-space:nowrap;letter-spacing:0.3px;left:18px;">173.000 vitengo</div>
<div class="ptile" style="left:427px;top:452px"><svg style="left:0;top:0" width="406" height="168" viewBox="428 453 406 168"><defs><linearGradient id="h1" x1="0" y1="0" x2="1" y2="0"><stop offset="0" stop-color="#5a3420"/><stop offset=".5" stop-color="#80502e"/><stop offset="1" stop-color="#5e3822"/></linearGradient><linearGradient id="d1" x1="0" y1="0" x2="1" y2="0"><stop offset="0" stop-color="#ecd23c"/><stop offset=".45" stop-color="#f6e356"/><stop offset="1" stop-color="#e8cc38"/></linearGradient></defs><filter id="bl427_452" x="-5%" y="-5%" width="110%" height="130%"><feGaussianBlur stdDeviation=".45"/></filter><g filter="url(#bl427_452)"><path d="M760.4,453.5C755.3,453.5 748.2,455.4 744.3,458.9C740.4,462.3 738.7,467.6 737.1,474.2C735.5,480.8 735.6,489.2 734.7,498.3C733.8,507.4 729.4,523.5 731.8,528.9C734.2,534.3 741.8,530.2 749.2,530.5C756.7,530.8 769.3,531.0 776.5,530.5C783.7,530.0 791.4,532.7 792.6,527.3C793.8,521.9 785.7,507.1 783.8,498.3C781.9,489.5 782.9,480.8 781.4,474.2C779.9,467.6 778.4,462.3 774.9,458.9C771.4,455.4 765.5,453.5 760.4,453.5Z" fill="url(#h1)" /><polygon points="720.2,575.6 730.6,578.9 730.6,619.9 716.1,619.9 718.6,595.0" fill="#e2a684" /><polygon points="795.9,572.4 812.3,561.1 818.4,595.0 821.6,619.9 799.9,619.9 791.0,591.8" fill="#e4a886" /><polygon points="748.4,509.6 770.9,509.6 773.3,530.5 754.8,549.9 741.1,528.9" fill="#dba07e" /><path d="M741.9,527.8C746.9,530.3 749.8,548.5 754.8,548.6C759.8,548.7 765.4,532.6 771.7,528.6C778.0,524.6 786.4,523.5 792.6,524.9C798.8,526.3 803.6,532.4 808.8,537.0C814.0,541.6 823.0,548.2 823.6,552.3C824.2,556.4 816.9,557.5 812.3,561.5C807.7,565.5 799.6,570.4 795.9,576.0C792.2,581.6 790.3,587.7 790.2,595.0C790.1,602.3 794.5,606.5 795.5,619.9C796.5,633.3 807.4,666.2 795.9,675.5C784.4,684.8 738.1,684.8 726.6,675.5C715.1,666.2 726.0,633.3 726.6,619.9C727.2,606.5 730.1,601.5 730.1,595.0C730.1,588.5 730.4,585.6 726.6,580.8C722.9,576.0 709.5,572.0 707.6,566.3C705.7,560.6 712.4,552.0 715.3,546.6C718.2,541.2 720.6,536.9 725.0,533.8C729.4,530.7 736.9,525.3 741.9,527.8Z" fill="url(#d1)" /><polygon points="726.6,612.7 795.9,612.7 796.7,619.9 726.3,619.9" fill="url(#d1)" /><polygon points="730.6,591.8 789.4,590.1 789.4,599.8 730.6,603.0" fill="#e6cb36" /><polygon points="754.8,548.6 773.3,578.9 771.7,588.5 749.2,553.1" fill="#ead03e" /><polygon points="707.6,566.3 726.6,580.8 728.2,577.3 710.5,562.8" fill="#e0c230" /><polygon points="812.3,561.5 823.6,552.3 821.6,549.9 811.2,557.9" fill="#e0c230" /><ellipse cx="759.6" cy="492.2" rx="16.1" ry="21.3" fill="#e8b494" /><ellipse cx="759.6" cy="501.5" rx="11.6" ry="12.1" fill="#ebb99a" /><path d="M760.4,453.5C761.5,453.6 753.5,456.0 750.8,459.7C748.1,463.4 745.5,469.4 744.3,475.8C743.1,482.2 743.0,491.3 743.5,498.3C744.0,505.3 747.6,512.6 747.5,517.7C747.4,522.8 745.2,527.0 742.7,528.9C740.2,530.8 733.5,534.0 732.2,528.9C730.9,523.8 733.9,507.4 734.7,498.3C735.5,489.2 735.5,480.8 737.1,474.2C738.7,467.6 740.4,462.3 744.3,458.9C748.2,455.4 759.3,453.4 760.4,453.5Z" fill="url(#h1)" /><path d="M760.4,453.5C759.6,453.6 767.5,456.0 770.1,459.7C772.7,463.4 774.7,469.4 775.7,475.8C776.7,482.2 776.1,490.5 776.2,498.3C776.3,506.1 775.6,511.8 776.5,522.5C777.4,533.2 780.2,549.1 781.4,562.8C782.6,576.5 782.1,600.6 783.8,604.6C785.5,608.6 789.9,593.9 791.8,586.9C793.7,579.9 795.0,571.6 795.4,562.8C795.8,553.9 795.4,540.5 794.3,533.8C793.2,527.1 790.4,528.4 788.6,522.5C786.9,516.6 785.0,506.4 783.8,498.3C782.6,490.2 782.9,480.8 781.4,474.2C779.9,467.6 778.4,462.3 774.9,458.9C771.4,455.4 761.2,453.4 760.4,453.5Z" fill="url(#h1)" /><ellipse cx="751.6" cy="487.4" rx="3.5" ry="1.3" fill="#4a3430" /><ellipse cx="766.9" cy="487.4" rx="3.5" ry="1.3" fill="#4a3430" /><ellipse cx="758.8" cy="503.2" rx="5.8" ry="2.3" fill="#d07878" /><ellipse cx="759.1" cy="495.1" rx="1.6" ry="3.2" fill="#d8a080" /></g></svg></div>
<div style="position:absolute;left:424px;top:449px;width:414px;height:176px;border:3px solid #1a76d8;"></div>
<div style="position:absolute;top:460.53px;font-family:'Liberation Sans','DejaVu Sans',sans-serif;font-size:18.67px;line-height:24px;color:#fff;white-space:nowrap;letter-spacing:0.16px;left:434.3px;background:rgba(40,40,40,.3);box-shadow:0 0 2px rgba(40,40,40,.3);padding:0 1px;margin-left:-1px;">Mavazi ya njano</div>
<div style="position:absolute;top:588.80px;font-family:'Liberation Sans','DejaVu Sans',sans-serif;font-size:10.67px;line-height:14px;color:#fff;white-space:nowrap;left:434px;">9.50 USD</div>
<div style="position:absolute;top:601.80px;font-family:'Liberation Sans','DejaVu Sans',sans-serif;font-size:10.67px;line-height:14px;color:#fff;white-space:nowrap;letter-spacing:0.3px;left:434px;">56.000 vitengo</div>
<div style="position:absolute;top:462.66px;font-family:'Liberation Sans','DejaVu Sans',sans-serif;font-size:18px;line-height:23px;color:#c4ffb4;white-space:nowrap;left:321.6px;width:1000px;text-align:center;-webkit-text-stroke:.35px #c4ffb4;">+</div>
<div class="ptile" style="left:11px;top:630px"><svg style="left:0;top:0" width="406" height="168" viewBox="12 631 406 168"><defs><linearGradient id="h2" x1="0" y1="0" x2="1" y2="0"><stop offset="0" stop-color="#7a543e"/><stop offset=".5" stop-color="#966a50"/><stop offset="1" stop-color="#7c5640"/></linearGradient><linearGradient id="d2" x1="0" y1="0" x2="1" y2="0"><stop offset="0" stop-color="#e8929a"/><stop offset=".2" stop-color="#f2a6ac"/><stop offset=".5" stop-color="#f4acb0"/><stop offset=".8" stop-color="#f0a0a8"/><stop offset="1" stop-color="#e48e98"/></linearGradient></defs><filter id="bl11_630" x="-5%" y="-5%" width="110%" height="130%"><feGaussianBlur stdDeviation=".45"/></filter><g filter="url(#bl11_630)"><path d="M352.5,631.2C347.5,631.3 341.8,633.1 338.0,636.9C334.2,640.7 331.6,647.2 329.6,653.8C327.6,660.4 326.8,668.5 325.9,676.3C325.0,684.1 323.6,694.5 324.0,700.5C324.4,706.5 325.3,709.6 328.3,712.6C331.3,715.6 335.6,717.9 342.0,718.5C348.4,719.1 360.7,717.4 367.0,716.3C373.3,715.2 376.8,715.0 379.9,712.1C383.0,709.2 385.3,704.9 385.8,698.9C386.3,692.9 384.4,684.1 383.1,676.3C381.9,668.5 380.9,658.9 378.3,652.2C375.8,645.5 372.1,639.6 367.8,636.1C363.5,632.6 357.5,631.1 352.5,631.2Z" fill="url(#h2)" /><path d="M292.1,734.3C282.4,730.7 292.2,725.4 294.2,722.2C296.2,719.0 299.0,716.8 304.2,715.3C309.4,713.8 318.4,714.0 325.1,713.4C331.8,712.8 337.7,712.1 344.4,711.8C351.1,711.5 359.5,710.3 365.4,711.8C371.3,713.3 374.8,718.5 379.9,720.6C385.0,722.7 391.4,722.6 396.0,724.6C400.6,726.6 405.1,728.9 407.6,732.7C410.1,736.5 420.0,745.3 410.8,747.2C401.6,749.1 372.3,746.1 352.5,744.0C332.7,741.9 301.8,737.9 292.1,734.3Z" fill="#e3a888" /><polygon points="343.6,700.5 366.2,700.5 370.2,721.4 339.6,721.4" fill="#d99c7c" /><path d="M291.3,732.7C296.7,728.1 310.1,736.1 320.3,737.5C330.5,738.9 341.8,740.1 352.5,741.1C363.2,742.1 375.0,742.5 384.7,743.2C394.4,743.9 406.3,740.3 410.8,745.3C415.3,750.3 412.1,764.2 411.8,773.0C411.5,781.8 409.7,784.5 409.2,797.9C408.7,811.3 429.2,844.2 408.9,853.5C388.6,862.8 307.5,862.8 287.2,853.5C266.9,844.2 287.0,812.7 287.2,797.9C287.4,783.1 287.4,775.8 288.1,764.9C288.8,754.0 285.9,737.3 291.3,732.7Z" fill="url(#d2)" /><polygon points="287.2,789.1 409.2,789.1 408.9,797.9 287.2,797.9" fill="url(#d2)" /><polygon points="306.6,740.8 311.4,741.6 311.4,797.9 308.7,797.9" fill="#e08a94" /><polygon points="391.1,746.4 395.2,746.9 392.8,797.9 386.3,797.9" fill="#e08a94" /><polygon points="320.3,744.0 322.2,744.0 320.3,797.9 318.3,797.9" fill="#f8bcc0" /><polygon points="376.6,745.6 378.6,745.6 376.6,797.9 374.7,797.9" fill="#f8bcc0" /><ellipse cx="354.4" cy="679.5" rx="16.9" ry="25.8" fill="#e6b092" /><ellipse cx="354.4" cy="687.6" rx="12.1" ry="14.5" fill="#eab89a" /><path d="M352.5,631.2C353.6,631.6 346.7,634.5 344.4,639.3C342.1,644.1 340.0,652.7 338.8,660.2C337.6,667.7 337.3,677.1 337.2,684.4C337.1,691.6 337.5,698.0 338.3,703.7C339.1,709.4 343.7,717.0 342.0,718.5C340.3,720.0 331.3,715.6 328.3,712.6C325.3,709.6 324.4,706.5 324.0,700.5C323.6,694.5 325.0,684.1 325.9,676.3C326.8,668.5 327.6,660.4 329.6,653.8C331.6,647.2 334.2,640.7 338.0,636.9C341.8,633.1 351.4,630.8 352.5,631.2Z" fill="url(#h2)" /><path d="M352.5,631.2C351.6,631.7 359.2,634.5 362.2,639.3C365.1,644.1 368.5,652.7 370.2,660.2C371.9,667.7 372.6,677.1 372.6,684.4C372.6,691.6 371.1,698.4 370.2,703.7C369.3,709.0 365.4,714.9 367.0,716.3C368.6,717.7 376.8,715.0 379.9,712.1C383.0,709.2 385.3,704.9 385.8,698.9C386.3,692.9 384.4,684.1 383.1,676.3C381.9,668.5 380.9,658.9 378.3,652.2C375.8,645.5 372.1,639.6 367.8,636.1C363.5,632.6 353.4,630.7 352.5,631.2Z" fill="url(#h2)" /><ellipse cx="345.2" cy="670.2" rx="3.9" ry="1.4" fill="#4a3634" /><ellipse cx="364.9" cy="669.6" rx="3.9" ry="1.4" fill="#4a3634" /><ellipse cx="355.1" cy="692.4" rx="7.1" ry="2.4" fill="#cc7a7a" /><ellipse cx="354.9" cy="682.8" rx="1.8" ry="3.9" fill="#d8a080" /></g></svg></div>
<div style="position:absolute;top:638.53px;font-family:'Liberation Sans','DejaVu Sans',sans-serif;font-size:18.67px;line-height:24px;color:#fff;white-space:nowrap;letter-spacing:0.2px;left:18.3px;background:rgba(40,40,40,.3);box-shadow:0 0 2px rgba(40,40,40,.3);padding:0 1px;margin-left:-1px;">Mavazi ya pink</div>
<div style="position:absolute;top:766.80px;font-family:'Liberation Sans','DejaVu Sans',sans-serif;font-size:10.67px;line-height:14px;color:#fff;white-space:nowrap;left:18px;">9.00 USD</div>
<div style="position:absolute;top:779.80px;font-family:'Liberation Sans','DejaVu Sans',sans-serif;font-size:10.67px;line-height:14px;color:#fff;white-space:nowrap;letter-spacing:0.3px;left:18px;">4.000 vitengo</div>
<div style="position:absolute;top:640.66px;font-family:'Liberation Sans','DejaVu Sans',sans-serif;font-size:18px;line-height:23px;color:#c4ffb4;white-space:nowrap;left:-94.39999999999998px;width:1000px;text-align:center;-webkit-text-stroke:.35px #c4ffb4;">+</div>
<div class="ptile" style="left:427px;top:630px"><svg style="left:0;top:0" width="406" height="168" viewBox="428 631 406 168"><defs><linearGradient id="j3" x1="0" y1="0" x2="1" y2="0"><stop offset="0" stop-color="#243c80"/><stop offset=".3" stop-color="#2f4c94"/><stop offset=".7" stop-color="#2c4890"/><stop offset="1" stop-color="#21387a"/></linearGradient></defs><filter id="bl427_630" x="-5%" y="-5%" width="110%" height="130%"><feGaussianBlur stdDeviation=".45"/></filter><g filter="url(#bl427_630)"><ellipse cx="747.9" cy="670.2" rx="2.6" ry="5.5" fill="#e0a890" /><ellipse cx="788.6" cy="670.2" rx="2.6" ry="5.5" fill="#e0a890" /><path d="M749.2,700.5C739.9,701.8 736.8,706.0 730.6,708.5C724.4,711.0 716.0,709.9 712.1,715.8C708.2,721.7 708.8,734.5 707.3,744.0C705.8,753.5 703.9,764.0 703.2,773.0C702.5,782.0 703.2,784.5 703.2,797.9C703.2,811.3 682.4,844.2 703.2,853.5C724.0,862.8 807.3,862.8 828.1,853.5C848.9,844.2 828.2,814.0 828.1,797.9C828.0,781.8 827.8,767.8 827.3,756.9C826.8,746.0 825.8,739.7 824.9,732.7C824.0,725.7 825.1,719.2 821.6,715.0C818.1,710.8 809.8,710.1 803.9,707.7C798.0,705.3 795.3,701.7 786.2,700.5C777.1,699.3 758.5,699.2 749.2,700.5Z" fill="url(#j3)" /><polygon points="703.2,789.1 828.1,789.1 828.1,797.9 703.2,797.9" fill="url(#j3)" /><polygon points="750.8,695.7 784.6,695.7 786.2,718.2 779.8,797.9 759.6,797.9 750.8,718.2" fill="#1b2a7c" /><polygon points="760.4,761.7 779.0,761.7 778.5,797.9 760.1,797.9" fill="#141e62" /><polygon points="749.2,700.5 737.1,713.4 758.8,786.7 760.8,773.0 751.6,718.2" fill="#37588f" /><polygon points="785.7,700.5 797.2,711.8 779.8,783.4 778.2,764.9 784.1,718.2" fill="#37588f" /><polygon points="752.1,706.1 766.9,711.0 782.2,705.0 782.7,716.3 766.9,713.1 752.7,717.4" fill="#5a4c66" /><polygon points="790.2,748.0 809.1,746.9 809.1,750.1 790.2,751.4" fill="#4d7cc0" /><polygon points="722.6,781.0 724.2,781.0 721.8,797.9 719.8,797.9" fill="#d0d0d8" opacity=".6"/><polygon points="813.3,782.6 814.9,782.6 816.5,797.9 814.6,797.9" fill="#c0c0c8" opacity=".6"/><ellipse cx="767.7" cy="655.4" rx="19.5" ry="20.6" fill="#5e3a22" /><ellipse cx="767.7" cy="674.7" rx="18.0" ry="26.1" fill="#ebbca4" /><path d="M750.8,679.5 C752.4,705.3 783.0,705.3 784.6,679.5" fill="none" stroke="#b89078" stroke-width="3" opacity=".8"/><path d="M747.2,646.0C747.5,642.0 748.0,641.2 750.8,639.0C753.5,636.8 759.1,633.6 763.7,632.5C768.3,631.4 774.9,631.1 778.5,632.5C782.1,633.9 784.0,637.6 785.6,640.6C787.2,643.6 787.8,646.9 788.1,650.6C788.4,654.3 787.9,661.9 787.2,662.6C786.5,663.3 785.6,656.8 783.8,654.6C782.0,652.4 780.4,650.1 776.5,649.3C772.6,648.5 764.4,649.4 760.4,649.9C756.4,650.4 754.6,650.3 752.7,652.5C750.8,654.7 750.1,664.2 749.2,663.1C748.3,662.0 746.9,650.0 747.2,646.0Z" fill="#6e4428" /><ellipse cx="758.8" cy="667.5" rx="3.9" ry="1.4" fill="#3a2a28" /><ellipse cx="776.5" cy="667.5" rx="3.9" ry="1.4" fill="#3a2a28" /><ellipse cx="767.7" cy="684.7" rx="6.4" ry="1.4" fill="#8a6050" /></g></svg></div>
<div style="position:absolute;top:638.53px;font-family:'Liberation Sans','DejaVu Sans',sans-serif;font-size:18.67px;line-height:24px;color:#fff;white-space:nowrap;letter-spacing:0.07px;left:434.3px;background:rgba(40,40,40,.3);box-shadow:0 0 2px rgba(40,40,40,.3);padding:0 1px;margin-left:-1px;">Suti ya bluu ya wanaume</div>
<div style="position:absolute;top:766.80px;font-family:'Liberation Sans','DejaVu Sans',sans-serif;font-size:10.67px;line-height:14px;color:#fff;white-space:nowrap;left:434px;">15.00 USD</div>
<div style="position:absolute;top:779.80px;font-family:'Liberation Sans','DejaVu Sans',sans-serif;font-size:10.67px;line-height:14px;color:#fff;white-space:nowrap;letter-spacing:0.3px;left:434px;">4.000 vitengo</div>
<div style="position:absolute;top:640.66px;font-family:'Liberation Sans','DejaVu Sans',sans-serif;font-size:18px;line-height:23px;color:#c4ffb4;white-space:nowrap;left:321.6px;width:1000px;text-align:center;-webkit-text-stroke:.35px #c4ffb4;">+</div>
<div class="ptile" style="left:11px;top:808px"><svg style="left:0;top:0" width="406" height="168" viewBox="12 809 406 168"><defs><linearGradient id="j4" x1="0" y1="0" x2="1" y2="0"><stop offset="0" stop-color="#3a3236"/><stop offset=".4" stop-color="#4a4246"/><stop offset="1" stop-color="#383236"/></linearGradient></defs><filter id="bl11_808" x="-5%" y="-5%" width="110%" height="130%"><feGaussianBlur stdDeviation=".45"/></filter><g filter="url(#bl11_808)"><polygon points="343.6,870.4 366.2,867.2 370.2,889.8 347.7,902.6 334.8,883.3" fill="#d8a890" /><ellipse cx="367.0" cy="853.0" rx="3.5" ry="6.1" fill="#e2b49c" /><path d="M334.0,884.9C327.6,884.6 320.3,891.1 313.8,894.6C307.3,898.1 298.6,899.2 294.8,905.9C291.0,912.6 291.7,923.2 291.0,934.9C290.3,946.6 290.6,959.8 290.5,975.9C290.4,992.0 270.4,1022.2 290.5,1031.5C310.6,1040.8 391.2,1040.8 411.3,1031.5C431.4,1022.2 411.7,992.0 411.3,975.9C410.9,959.8 410.4,947.3 409.2,934.9C408.0,922.5 408.2,908.2 404.4,901.4C400.6,894.5 391.9,896.1 386.3,893.8C380.7,891.5 376.1,887.4 370.5,887.8C364.9,888.2 358.6,896.7 352.5,896.2C346.4,895.7 340.4,885.2 334.0,884.9Z" fill="url(#j4)" /><polygon points="334.0,883.3 343.6,887.3 352.5,900.2 363.8,895.4 370.2,886.5 376.6,905.9 378.6,922.0 376.3,944.5 373.8,960.6 370.2,951.0 360.5,928.4 349.3,904.3" fill="#f2f2f6" /><polygon points="353.3,899.1 362.2,896.2 365.4,910.7 374.7,959.0 372.5,967.1 363.8,946.1 355.7,906.7" fill="#1c1c20" /><polygon points="334.0,884.9 328.3,893.8 331.9,898.6 370.2,967.9 373.1,966.3 349.3,904.3" fill="#2e282c" /><polygon points="370.5,887.8 380.8,901.0 377.0,909.1 376.6,967.1 373.4,966.3 378.6,922.0 376.6,905.9" fill="#302a2e" /><path d="M323.2,835.0C323.9,832.3 322.9,832.2 328.3,831.8C333.7,831.4 349.9,830.5 355.7,832.6C361.5,834.8 361.5,840.3 363.0,844.7C364.5,849.1 365.0,854.4 364.6,859.2C364.2,864.0 363.1,869.7 360.5,873.7C357.9,877.7 352.8,881.7 349.3,883.3C345.8,884.9 342.6,884.6 339.6,883.3C336.6,882.0 333.6,879.0 331.5,875.3C329.4,871.5 327.9,865.4 326.7,860.8C325.5,856.2 324.9,852.2 324.3,847.9C323.7,843.6 322.5,837.7 323.2,835.0Z" fill="#eac4ac" /><path d="M355.7,838.2C356.9,834.5 361.5,841.2 363.0,844.7C364.5,848.2 365.0,854.4 364.6,859.2C364.2,864.0 362.8,869.7 360.5,873.7C358.2,877.7 351.7,884.1 350.9,883.0C350.1,881.9 354.9,874.7 355.7,867.2C356.5,859.7 354.5,842.0 355.7,838.2Z" fill="#dfb49c" /><path d="M321.9,824.0C322.6,821.9 322.9,818.5 326.7,816.5C330.4,814.5 339.2,812.4 344.4,812.1C349.5,811.8 353.8,813.2 357.6,814.9C361.4,816.6 365.2,819.0 367.3,822.1C369.4,825.2 370.1,829.6 370.5,833.7C370.9,837.8 370.7,844.2 369.6,846.6C368.5,849.0 365.6,849.6 364.1,848.2C362.6,846.8 361.9,840.6 360.5,838.2C359.1,835.8 360.8,834.5 355.4,833.7C350.0,833.0 333.8,834.5 328.3,833.7C322.8,832.9 323.6,830.5 322.5,828.9C321.4,827.3 321.2,826.1 321.9,824.0Z" fill="#5c3222" /><ellipse cx="329.9" cy="851.9" rx="3.2" ry="1.3" fill="#4a4038" /><ellipse cx="346.0" cy="850.3" rx="3.5" ry="1.3" fill="#4a4038" /><ellipse cx="337.2" cy="870.8" rx="5.2" ry="1.4" fill="#c08878" /></g></svg></div>
<div style="position:absolute;top:816.53px;font-family:'Liberation Sans','DejaVu Sans',sans-serif;font-size:18.67px;line-height:24px;color:#fff;white-space:nowrap;left:18.3px;background:rgba(40,40,40,.3);box-shadow:0 0 2px rgba(40,40,40,.3);padding:0 1px;margin-left:-1px;">Suti ya wanaume weusi</div>
<div style="position:absolute;top:944.80px;font-family:'Liberation Sans','DejaVu Sans',sans-serif;font-size:10.67px;line-height:14px;color:#fff;white-space:nowrap;left:18px;">15.00 USD</div>
<div style="position:absolute;top:957.80px;font-family:'Liberation Sans','DejaVu Sans',sans-serif;font-size:10.67px;line-height:14px;color:#fff;white-space:nowrap;letter-spacing:0.3px;left:18px;">70.000 vitengo</div>
<div style="position:absolute;top:818.66px;font-family:'Liberation Sans','DejaVu Sans',sans-serif;font-size:18px;line-height:23px;color:#c4ffb4;white-space:nowrap;left:-94.39999999999998px;width:1000px;text-align:center;-webkit-text-stroke:.35px #c4ffb4;">+</div>
<div class="ptile" style="left:427px;top:808px"><svg style="left:0;top:0" width="406" height="168" viewBox="428 809 406 168"><defs><linearGradient id="j5" x1="0" y1="0" x2="1" y2="0"><stop offset="0" stop-color="#087258"/><stop offset=".3" stop-color="#0c866a"/><stop offset=".7" stop-color="#0b8266"/><stop offset="1" stop-color="#076c54"/></linearGradient><linearGradient id="h5" x1="0" y1="0" x2="0" y2="1"><stop offset="0" stop-color="#9a5a24"/><stop offset="1" stop-color="#4c2c1a"/></linearGradient></defs><filter id="bl427_808" x="-5%" y="-5%" width="110%" height="130%"><feGaussianBlur stdDeviation=".45"/></filter><g filter="url(#bl427_808)"><ellipse cx="748.4" cy="848.7" rx="2.6" ry="5.5" fill="#dca488" /><ellipse cx="789.4" cy="848.7" rx="2.6" ry="5.5" fill="#dca488" /><path d="M750.8,878.5C741.9,879.8 738.4,883.7 732.2,886.2C726.0,888.8 717.9,889.4 713.7,893.8C709.6,898.1 709.0,906.5 707.3,912.3C705.5,918.1 703.9,917.8 703.2,928.4C702.5,939.0 703.2,958.7 703.2,975.9C703.2,993.1 682.4,1022.2 703.2,1031.5C724.0,1040.8 807.3,1040.8 828.1,1031.5C848.9,1022.2 828.1,994.1 828.1,975.9C828.1,957.6 828.6,933.7 828.1,922.0C827.6,910.3 826.1,910.6 824.9,905.9C823.7,901.2 824.4,897.1 820.8,893.8C817.2,890.5 809.0,888.8 803.1,886.2C797.2,883.7 794.1,879.8 785.4,878.5C776.7,877.2 759.7,877.2 750.8,878.5Z" fill="url(#j5)" /><polygon points="703.2,967.1 828.1,967.1 828.1,975.9 703.2,975.9" fill="url(#j5)" /><polygon points="722.6,942.9 728.2,970.3 715.3,961.4" fill="#5c5c5c" /><polygon points="812.8,942.9 821.6,960.6 807.1,971.1" fill="#5c5c5c" /><polygon points="751.6,875.3 784.9,875.3 783.8,902.6 776.5,942.9 769.3,958.2 762.0,942.9 752.7,902.6" fill="#5cc85c" /><polygon points="751.6,875.3 768.5,889.8 784.9,875.3 783.0,899.4 773.3,892.2 768.5,890.6 763.7,892.2 754.0,899.4" fill="#6cd468" /><polygon points="765.6,891.1 773.0,891.1 776.9,934.9 769.3,958.2 764.9,934.9" fill="#1cc484" /><polygon points="767.7,893.0 770.4,893.0 771.7,934.9 769.3,951.0" fill="#5ce0a8" /><polygon points="750.8,878.5 739.2,889.8 768.8,958.2 754.3,902.6" fill="#08705a" /><polygon points="785.4,878.5 797.2,889.8 769.8,958.2 783.8,902.6" fill="#08705a" /><ellipse cx="768.5" cy="833.7" rx="20.0" ry="20.6" fill="#4e2e1a" /><ellipse cx="768.5" cy="852.7" rx="18.0" ry="26.1" fill="#e4ae90" /><path d="M751.6,857.5 C753.2,883.6 783.8,883.6 785.4,857.5" fill="none" stroke="#b0846c" stroke-width="3" opacity=".8"/><path d="M746.7,827.3C746.8,823.1 747.7,822.5 750.8,819.7C753.9,816.9 760.5,811.9 765.3,810.5C770.1,809.1 776.3,810.1 779.8,811.5C783.3,812.9 784.8,816.3 786.5,818.9C788.2,821.5 789.5,823.2 789.8,827.3C790.1,831.4 789.1,842.3 788.1,843.4C787.1,844.5 785.4,836.1 784.0,833.7C782.6,831.3 784.3,829.7 779.8,828.9C775.3,828.1 761.8,828.4 757.2,828.9C752.6,829.4 753.6,829.4 752.4,832.1C751.2,834.8 751.0,845.8 750.0,845.0C749.0,844.2 746.6,831.5 746.7,827.3Z" fill="url(#h5)" /><ellipse cx="759.6" cy="844.7" rx="3.9" ry="1.4" fill="#3a2a28" /><ellipse cx="777.3" cy="844.7" rx="3.9" ry="1.4" fill="#3a2a28" /><ellipse cx="768.5" cy="862.7" rx="6.1" ry="1.6" fill="#b87868" /></g></svg></div>
<div style="position:absolute;top:816.53px;font-family:'Liberation Sans','DejaVu Sans',sans-serif;font-size:18.67px;line-height:24px;color:#fff;white-space:nowrap;letter-spacing:0.02px;left:434.3px;background:rgba(40,40,40,.3);box-shadow:0 0 2px rgba(40,40,40,.3);padding:0 1px;margin-left:-1px;">Suti ya wanaume ya kijani</div>
<div style="position:absolute;top:944.80px;font-family:'Liberation Sans','DejaVu Sans',sans-serif;font-size:10.67px;line-height:14px;color:#fff;white-space:nowrap;left:434px;">15.00 USD</div>
<div style="position:absolute;top:957.80px;font-family:'Liberation Sans','DejaVu Sans',sans-serif;font-size:10.67px;line-height:14px;color:#fff;white-space:nowrap;letter-spacing:0.3px;left:434px;">15.000 vitengo</div>
<div style="position:absolute;left:3px;top:1033px;width:49px;height:41px;border:1px solid #c9c9c9;border-radius:3px;background:linear-gradient(#f6f6f6,#e6e6e6);"></div>
<div style="position:absolute;left:54px;top:1033px;width:49px;height:41px;border:1px solid #c9c9c9;border-radius:3px;background:linear-gradient(#f6f6f6,#e6e6e6);"></div>
<svg style="left:0px;top:1030px" width="110" height="46" viewBox="0 1030 110 46"><defs><linearGradient id="vb" x1="0" y1="0" x2="0" y2="1"><stop offset="0" stop-color="#a8ccec"/><stop offset="1" stop-color="#6aa0d8"/></linearGradient></defs><rect x="13.5" y="1039" width="27.5" height="26.5" fill="#fff" stroke="#5a8cd0" stroke-width=".9"/><rect x="13.5" y="1039" width="27.5" height="6" fill="#4a80c8"/><path d="M22.5,1045 V1065.5" stroke="#9cc0e8" stroke-width="1"/><path d="M31.6,1045 V1065.5" stroke="#9cc0e8" stroke-width="1"/><path d="M13.5,1050.2 H41" stroke="#9cc0e8" stroke-width="1"/><path d="M13.5,1055.4 H41" stroke="#9cc0e8" stroke-width="1"/><path d="M13.5,1060.4 H41" stroke="#9cc0e8" stroke-width="1"/><rect x="63.3" y="1040" width="13.6" height="7.4" rx="1" fill="url(#vb)" stroke="#4a80c8" stroke-width=".8"/><rect x="63.3" y="1049.4" width="13.6" height="7.4" rx="1" fill="url(#vb)" stroke="#4a80c8" stroke-width=".8"/><rect x="63.3" y="1058.6" width="13.6" height="7.4" rx="1" fill="url(#vb)" stroke="#4a80c8" stroke-width=".8"/><rect x="78.3" y="1040" width="13.6" height="7.4" rx="1" fill="url(#vb)" stroke="#4a80c8" stroke-width=".8"/><rect x="78.3" y="1049.4" width="13.6" height="7.4" rx="1" fill="url(#vb)" stroke="#4a80c8" stroke-width=".8"/><rect x="78.3" y="1058.6" width="13.6" height="7.4" rx="1" fill="url(#vb)" stroke="#4a80c8" stroke-width=".8"/></svg>
<div style="position:absolute;left:887px;top:532px;width:1px;height:1px;background:#606060;"></div>
<div style="position:absolute;left:887px;top:534px;width:1px;height:1px;background:#606060;"></div>
<div style="position:absolute;left:887px;top:536px;width:1px;height:1px;background:#606060;"></div>
<div style="position:absolute;left:887px;top:538px;width:1px;height:1px;background:#606060;"></div>
<div style="position:absolute;left:887px;top:540px;width:1px;height:1px;background:#606060;"></div>
<div style="position:absolute;left:887px;top:542px;width:1px;height:1px;background:#606060;"></div>
<div style="position:absolute;left:887px;top:544px;width:1px;height:1px;background:#606060;"></div>
<div style="position:absolute;left:887px;top:546px;width:1px;height:1px;background:#606060;"></div>
<div style="position:absolute;left:894px;top:0px;width:1026px;height:1080px;border:1px solid #bdbdbd;border-top-color:#d6c6bc;border-right-color:#e4e4e4;background:#fff;"></div>
<div style="position:absolute;left:895px;top:1px;width:1024px;height:42px;background:#00a9ff;"></div>
<div style="position:absolute;top:4.97px;font-family:'DejaVu Sans Condensed','DejaVu Sans','Liberation Sans',sans-serif;font-size:26.67px;line-height:35px;color:#fff;white-space:nowrap;left:906.7px;width:1000px;text-align:center;">Uuzaji</div>
<svg style="left:1885px;top:9px" width="26" height="26" viewBox="0 0 26 26"><path d="M4 4 L22 22 M22 4 L4 22" stroke="#fff" stroke-width="5" stroke-linecap="round"/><path d="M4 4 L22 22 M22 4 L4 22" stroke="#000" stroke-width="3" stroke-linecap="round"/></svg>
<div style="position:absolute;top:54.41px;font-family:'DejaVu Sans Condensed','DejaVu Sans','Liberation Sans',sans-serif;font-size:10.67px;line-height:14px;color:#1c1c30;white-space:nowrap;left:897.5px;">Muuzaji</div>
<div style="position:absolute;top:85.41px;font-family:'DejaVu Sans Condensed','DejaVu Sans','Liberation Sans',sans-serif;font-size:10.67px;line-height:14px;color:#1c1c30;white-space:nowrap;left:897.5px;">Mteja (F10)</div>
<div style="position:absolute;left:988px;top:43px;width:35px;height:35px;border:1px solid #cfcfcf;border-radius:4px;background:linear-gradient(#f4f4f4,#e4e4e4);"></div>
<svg style="left:990px;top:43px" width="30" height="34" viewBox="990 43 30 34"><defs><linearGradient id="lk" x1="0" y1="0" x2="0" y2="1"><stop offset="0" stop-color="#ffe070"/><stop offset=".5" stop-color="#f0b830"/><stop offset="1" stop-color="#c88a18"/></linearGradient><linearGradient id="sh" x1="0" y1="0" x2="1" y2="0"><stop offset="0" stop-color="#808488"/><stop offset=".5" stop-color="#e0e4e8"/><stop offset="1" stop-color="#7c8084"/></linearGradient></defs><path d="M996.2,59 V54.4 C996.2,42.8 1013.8,42.8 1013.8,54.4 V59" fill="none" stroke="url(#sh)" stroke-width="3.4"/><rect x="993.2" y="58.2" width="23.6" height="15.6" rx="1.6" fill="url(#lk)" stroke="#a87410" stroke-width=".8"/><circle cx="1005" cy="64" r="2" fill="#2a2218"/><path d="M1004,64.5 L1003.3,69.6 H1006.7 L1006,64.5Z" fill="#2a2218"/></svg>
<div class="inp dis" style="left:1024px;top:46px;width:446px;height:29px"></div>
<div style="position:absolute;top:52.05px;font-family:'DejaVu Sans Condensed','DejaVu Sans','Liberation Sans',sans-serif;font-size:12px;line-height:16px;color:#b9b9b9;white-space:nowrap;font-weight:bold;letter-spacing:0.15px;left:1026px;">Mfanyakazi #2</div>
<svg style="left:1452px;top:58px" width="8" height="4" viewBox="0 0 8 4"><path d="M0 0H8L4 4Z" fill="#b0b0b0"/></svg>
<div class="inp dis" style="left:1472px;top:46px;width:446px;height:29px"></div>
<div style="position:absolute;top:51.95px;font-family:'DejaVu Sans Condensed','DejaVu Sans','Liberation Sans',sans-serif;font-size:12px;line-height:16px;color:#b9b9b9;white-space:nowrap;font-weight:bold;letter-spacing:0.25px;left:1474.5px;">Jina la kisheria</div>
<svg style="left:1900px;top:58px" width="8" height="4" viewBox="0 0 8 4"><path d="M0 0H8L4 4Z" fill="#b0b0b0"/></svg>
<div class="inp" style="left:1024px;top:77px;width:446px;height:29px"></div>
<div class="inp dis" style="left:1472px;top:77px;width:446px;height:29px"></div>
<div style="position:absolute;top:82.95px;font-family:'DejaVu Sans Condensed','DejaVu Sans','Liberation Sans',sans-serif;font-size:12px;line-height:16px;color:#b9b9b9;white-space:nowrap;font-weight:bold;letter-spacing:0.25px;left:1474.5px;">09.12.2022</div>
<svg style="left:1900px;top:89px" width="8" height="4" viewBox="0 0 8 4"><path d="M0 0H8L4 4Z" fill="#b0b0b0"/></svg>
<div style="position:absolute;top:114.05px;font-family:'DejaVu Sans Condensed','DejaVu Sans','Liberation Sans',sans-serif;font-size:12px;line-height:16px;color:#1e1e1e;white-space:nowrap;font-weight:bold;letter-spacing:0.27px;left:898px;">Mteja chaguo-msingi, Bila punguzo</div>
<div style="position:absolute;left:895px;top:137px;width:1024px;height:26px;background:#00a9ff;"></div>
<div style="position:absolute;top:142.85px;font-family:'DejaVu Sans Condensed','DejaVu Sans','Liberation Sans',sans-serif;font-size:12px;line-height:16px;color:#fff;white-space:nowrap;font-weight:bold;letter-spacing:0.27px;left:906.5px;width:1000px;text-align:center;">Orodha ya mauzo</div>
<div style="position:absolute;top:167.41px;font-family:'DejaVu Sans Condensed','DejaVu Sans','Liberation Sans',sans-serif;font-size:10.67px;line-height:14px;color:#1c1c30;white-space:nowrap;left:899.5px;">Kiasi (F7) na Barcode (F8)</div>
<div style="position:absolute;top:167.41px;font-family:'DejaVu Sans Condensed','DejaVu Sans','Liberation Sans',sans-serif;font-size:10.67px;line-height:14px;color:#1c1c30;white-space:nowrap;left:1473px;">Jina la bidhaa</div>
<div class="inp" style="left:899px;top:182px;width:99px;height:29px"></div>
<div style="position:absolute;top:184.44px;font-family:'DejaVu Sans Condensed','DejaVu Sans','Liberation Sans',sans-serif;font-size:18.67px;line-height:24px;color:#2e2e2e;white-space:nowrap;font-weight:bold;letter-spacing:0.3px;left:902px;">1.000</div>
<svg style="left:981px;top:189px" width="7" height="4" viewBox="0 0 7 4"><path d="M0 4H7L3.5 0Z" fill="#666"/></svg>
<svg style="left:981px;top:201px" width="7" height="4" viewBox="0 0 7 4"><path d="M0 0H7L3.5 4Z" fill="#666"/></svg>
<div style="position:absolute;top:185.56px;font-family:'DejaVu Sans Condensed','DejaVu Sans','Liberation Sans',sans-serif;font-size:16px;line-height:21px;color:#333;white-space:nowrap;left:510px;width:1000px;text-align:center;">x</div>
<div class="inp" style="left:1024px;top:182px;width:446px;height:29px"></div>
<div style="position:absolute;top:184.44px;font-family:'DejaVu Sans Condensed','DejaVu Sans','Liberation Sans',sans-serif;font-size:18.67px;line-height:24px;color:#2e2e2e;white-space:nowrap;font-weight:bold;letter-spacing:0.3px;left:1026.3px;">0000000000000</div>
<div class="inp" style="left:1472px;top:182px;width:446px;height:29px"></div>
<div style="position:absolute;left:895px;top:213px;width:1024px;height:722px;border:1px solid #c4c4c4;border-left:none;background:#fff;"></div>
<div style="position:absolute;left:895px;top:213px;width:1px;height:235px;background:#c4c4c4;"></div>
<div style="position:absolute;left:896px;top:214px;width:1022px;height:45px;background:#f5f5f5;"></div>
<div style="position:absolute;left:896px;top:259px;width:1022px;height:1px;background:#c4c4c4;"></div>
<div style="position:absolute;left:896px;top:260px;width:10px;height:187px;background:#f5f5f5;"></div>
<div style="position:absolute;left:906px;top:214px;width:1px;height:233px;background:#c4c4c4;"></div>
<div style="position:absolute;left:1367px;top:214px;width:1px;height:45px;background:#c4c4c4;"></div>
<div style="position:absolute;left:1507px;top:214px;width:1px;height:45px;background:#c4c4c4;"></div>
<div style="position:absolute;left:1644px;top:214px;width:1px;height:45px;background:#c4c4c4;"></div>
<div style="position:absolute;left:1743px;top:214px;width:1px;height:45px;background:#c4c4c4;"></div>
<div style="position:absolute;top:227.06px;font-family:'DejaVu Sans Condensed','DejaVu Sans','Liberation Sans',sans-serif;font-size:16px;line-height:21px;color:#2a2a2a;white-space:nowrap;letter-spacing:-0.14px;left:909px;">Jina</div>
<div style="position:absolute;top:227.06px;font-family:'DejaVu Sans Condensed','DejaVu Sans','Liberation Sans',sans-serif;font-size:16px;line-height:21px;color:#2a2a2a;white-space:nowrap;letter-spacing:-0.14px;left:1370px;">Punguzo</div>
<div style="position:absolute;top:227.06px;font-family:'DejaVu Sans Condensed','DejaVu Sans','Liberation Sans',sans-serif;font-size:16px;line-height:21px;color:#2a2a2a;white-space:nowrap;letter-spacing:-0.14px;left:1510px;">Bei</div>
<div style="position:absolute;top:227.06px;font-family:'DejaVu Sans Condensed','DejaVu Sans','Liberation Sans',sans-serif;font-size:16px;line-height:21px;color:#2a2a2a;white-space:nowrap;letter-spacing:-0.14px;left:1647px;">Kiasi</div>
<div style="position:absolute;top:227.06px;font-family:'DejaVu Sans Condensed','DejaVu Sans','Liberation Sans',sans-serif;font-size:16px;line-height:21px;color:#2a2a2a;white-space:nowrap;letter-spacing:-0.14px;left:1746px;">Sum</div>
<div style="position:absolute;left:907px;top:260px;width:1011px;height:46px;background:#d9f1ff;"></div>
<div style="position:absolute;left:896px;top:306px;width:1022px;height:1px;background:#c4c4c4;"></div>
<div style="position:absolute;top:273.26px;font-family:'DejaVu Sans Condensed','DejaVu Sans','Liberation Sans',sans-serif;font-size:16px;line-height:21px;color:#2a2a2a;white-space:nowrap;letter-spacing:-0.14px;left:909px;">1. Suti ya bluu ya wanaume, 10002, vitengo</div>
<div style="position:absolute;top:273.26px;font-family:'DejaVu Sans Condensed','DejaVu Sans','Liberation Sans',sans-serif;font-size:16px;line-height:21px;color:#2a2a2a;white-space:nowrap;letter-spacing:-0.14px;right:414.4000000000001px;text-align:right;">0.00</div>
<div style="position:absolute;top:273.26px;font-family:'DejaVu Sans Condensed','DejaVu Sans','Liberation Sans',sans-serif;font-size:16px;line-height:21px;color:#2a2a2a;white-space:nowrap;letter-spacing:-0.14px;right:277.29999999999995px;text-align:right;">15.00</div>
<div style="position:absolute;top:273.26px;font-family:'DejaVu Sans Condensed','DejaVu Sans','Liberation Sans',sans-serif;font-size:16px;line-height:21px;color:#2a2a2a;white-space:nowrap;letter-spacing:-0.14px;right:178.29999999999995px;text-align:right;">1.000</div>
<div style="position:absolute;top:273.26px;font-family:'DejaVu Sans Condensed','DejaVu Sans','Liberation Sans',sans-serif;font-size:16px;line-height:21px;color:#2a2a2a;white-space:nowrap;letter-spacing:-0.14px;right:4px;text-align:right;">15.00</div>
<div style="position:absolute;left:907px;top:307px;width:1011px;height:46px;background:#dcfbe3;"></div>
<div style="position:absolute;left:896px;top:353px;width:1022px;height:1px;background:#c4c4c4;"></div>
<div style="position:absolute;top:320.26px;font-family:'DejaVu Sans Condensed','DejaVu Sans','Liberation Sans',sans-serif;font-size:16px;line-height:21px;color:#2a2a2a;white-space:nowrap;letter-spacing:-0.14px;left:909px;">2. Mavazi ya pink, 10006, vitengo</div>
<div style="position:absolute;top:320.26px;font-family:'DejaVu Sans Condensed','DejaVu Sans','Liberation Sans',sans-serif;font-size:16px;line-height:21px;color:#2a2a2a;white-space:nowrap;letter-spacing:-0.14px;right:414.4000000000001px;text-align:right;">0.00</div>
<div style="position:absolute;top:320.26px;font-family:'DejaVu Sans Condensed','DejaVu Sans','Liberation Sans',sans-serif;font-size:16px;line-height:21px;color:#2a2a2a;white-space:nowrap;letter-spacing:-0.14px;right:277.29999999999995px;text-align:right;">9.00</div>
<div style="position:absolute;top:320.26px;font-family:'DejaVu Sans Condensed','DejaVu Sans','Liberation Sans',sans-serif;font-size:16px;line-height:21px;color:#2a2a2a;white-space:nowrap;letter-spacing:-0.14px;right:178.29999999999995px;text-align:right;">1.000</div>
<div style="position:absolute;top:320.26px;font-family:'DejaVu Sans Condensed','DejaVu Sans','Liberation Sans',sans-serif;font-size:16px;line-height:21px;color:#2a2a2a;white-space:nowrap;letter-spacing:-0.14px;right:4px;text-align:right;">9.00</div>
<div style="position:absolute;left:907px;top:354px;width:1011px;height:46px;background:#d9f1ff;"></div>
<div style="position:absolute;left:896px;top:400px;width:1022px;height:1px;background:#c4c4c4;"></div>
<div style="position:absolute;top:367.26px;font-family:'DejaVu Sans Condensed','DejaVu Sans','Liberation Sans',sans-serif;font-size:16px;line-height:21px;color:#2a2a2a;white-space:nowrap;letter-spacing:-0.14px;left:909px;">3. Suti ya wanaume weusi, 10001, vitengo</div>
<div style="position:absolute;top:367.26px;font-family:'DejaVu Sans Condensed','DejaVu Sans','Liberation Sans',sans-serif;font-size:16px;line-height:21px;color:#2a2a2a;white-space:nowrap;letter-spacing:-0.14px;right:414.4000000000001px;text-align:right;">0.00</div>
<div style="position:absolute;top:367.26px;font-family:'DejaVu Sans Condensed','DejaVu Sans','Liberation Sans',sans-serif;font-size:16px;line-height:21px;color:#2a2a2a;white-space:nowrap;letter-spacing:-0.14px;right:277.29999999999995px;text-align:right;">15.00</div>
<div style="position:absolute;top:367.26px;font-family:'DejaVu Sans Condensed','DejaVu Sans','Liberation Sans',sans-serif;font-size:16px;line-height:21px;color:#2a2a2a;white-space:nowrap;letter-spacing:-0.14px;right:178.29999999999995px;text-align:right;">1.000</div>
<div style="position:absolute;top:367.26px;font-family:'DejaVu Sans Condensed','DejaVu Sans','Liberation Sans',sans-serif;font-size:16px;line-height:21px;color:#2a2a2a;white-space:nowrap;letter-spacing:-0.14px;right:4px;text-align:right;">15.00</div>
<div style="position:absolute;left:907px;top:401px;width:1011px;height:46px;background:#dcfbe3;"></div>
<div style="position:absolute;left:896px;top:447px;width:1022px;height:1px;background:#c4c4c4;"></div>
<div style="position:absolute;top:414.26px;font-family:'DejaVu Sans Condensed','DejaVu Sans','Liberation Sans',sans-serif;font-size:16px;line-height:21px;color:#2a2a2a;white-space:nowrap;letter-spacing:-0.14px;left:909px;">4. Mavazi ya njano, 10005, vitengo</div>
<div style="position:absolute;top:414.26px;font-family:'DejaVu Sans Condensed','DejaVu Sans','Liberation Sans',sans-serif;font-size:16px;line-height:21px;color:#2a2a2a;white-space:nowrap;letter-spacing:-0.14px;right:414.4000000000001px;text-align:right;">0.00</div>
<div style="position:absolute;top:414.26px;font-family:'DejaVu Sans Condensed','DejaVu Sans','Liberation Sans',sans-serif;font-size:16px;line-height:21px;color:#2a2a2a;white-space:nowrap;letter-spacing:-0.14px;right:277.29999999999995px;text-align:right;">9.50</div>
<div style="position:absolute;top:414.26px;font-family:'DejaVu Sans Condensed','DejaVu Sans','Liberation Sans',sans-serif;font-size:16px;line-height:21px;color:#2a2a2a;white-space:nowrap;letter-spacing:-0.14px;right:178.29999999999995px;text-align:right;">1.000</div>
<div style="position:absolute;top:414.26px;font-family:'DejaVu Sans Condensed','DejaVu Sans','Liberation Sans',sans-serif;font-size:16px;line-height:21px;color:#2a2a2a;white-space:nowrap;letter-spacing:-0.14px;right:4px;text-align:right;">9.50</div>
<svg style="left:899px;top:420px" width="4" height="8" viewBox="0 0 4 8"><path d="M0 0V8L4 4Z" fill="#555"/></svg>
<div style="position:absolute;left:896px;top:892px;width:1022px;height:1px;background:#c4c4c4;"></div>
<div style="position:absolute;left:896px;top:893px;width:1022px;height:41px;background:#f5f5f5;"></div>
<div class="inp" style="left:909px;top:895px;width:457px;height:37px;border-color:#d0d0d0"></div>
<div class="inp" style="left:1370px;top:895px;width:136px;height:37px;border-color:#d0d0d0"></div>
<div class="inp" style="left:1647px;top:895px;width:95px;height:37px;border-color:#d0d0d0"></div>
<div style="position:absolute;top:900.52px;font-family:'DejaVu Sans Condensed','DejaVu Sans','Liberation Sans',sans-serif;font-size:21.33px;line-height:28px;color:#303030;white-space:nowrap;font-weight:bold;left:914.6px;">48.50</div>
<div style="position:absolute;top:900.52px;font-family:'DejaVu Sans Condensed','DejaVu Sans','Liberation Sans',sans-serif;font-size:21.33px;line-height:28px;color:#303030;white-space:nowrap;font-weight:bold;right:419.5px;text-align:right;">0</div>
<div style="position:absolute;top:900.52px;font-family:'DejaVu Sans Condensed','DejaVu Sans','Liberation Sans',sans-serif;font-size:21.33px;line-height:28px;color:#303030;white-space:nowrap;font-weight:bold;right:183.5px;text-align:right;">4</div>
<div style="position:absolute;left:895px;top:935px;width:1024px;height:26px;background:#00a9ff;"></div>
<div style="position:absolute;top:940.85px;font-family:'DejaVu Sans Condensed','DejaVu Sans','Liberation Sans',sans-serif;font-size:12px;line-height:16px;color:#fff;white-space:nowrap;font-weight:bold;letter-spacing:0.27px;left:906.5px;width:1000px;text-align:center;">Malipo</div>
<div style="position:absolute;top:965.51px;font-family:'DejaVu Sans Condensed','DejaVu Sans','Liberation Sans',sans-serif;font-size:10.67px;line-height:14px;color:#1c1c30;white-space:nowrap;left:897px;">Chapisha ukaguzi (F11)</div>
<div style="position:absolute;top:965.51px;font-family:'DejaVu Sans Condensed','DejaVu Sans','Liberation Sans',sans-serif;font-size:10.67px;line-height:14px;color:#1c1c30;white-space:nowrap;left:1153px;">Aina ya malipo (F12)</div>
<div style="position:absolute;top:965.51px;font-family:'DejaVu Sans Condensed','DejaVu Sans','Liberation Sans',sans-serif;font-size:10.67px;line-height:14px;color:#1c1c30;white-space:nowrap;left:1409px;">Jumla kutoka kwa mteja (F9)</div>
<div style="position:absolute;top:965.51px;font-family:'DejaVu Sans Condensed','DejaVu Sans','Liberation Sans',sans-serif;font-size:10.67px;line-height:14px;color:#1c1c30;white-space:nowrap;left:1664.5px;">Pesa isiyo ya kawaida</div>
<div class="inp" style="left:896px;top:980px;width:248px;height:29px"></div>
<div style="position:absolute;top:987.25px;font-family:'DejaVu Sans Condensed','DejaVu Sans','Liberation Sans',sans-serif;font-size:12px;line-height:16px;color:#1e1e1e;white-space:nowrap;font-weight:bold;letter-spacing:0.27px;left:899.5px;">Hakuna cheki (F11)</div>
<svg style="left:1126px;top:992px" width="8" height="4" viewBox="0 0 8 4"><path d="M0 0H8L4 4Z" fill="#555"/></svg>
<div class="inp" style="left:1152px;top:980px;width:248px;height:29px"></div>
<div style="position:absolute;top:987.25px;font-family:'DejaVu Sans Condensed','DejaVu Sans','Liberation Sans',sans-serif;font-size:12px;line-height:16px;color:#1e1e1e;white-space:nowrap;font-weight:bold;letter-spacing:0.27px;left:1155px;">Fedha</div>
<svg style="left:1382px;top:992px" width="8" height="4" viewBox="0 0 8 4"><path d="M0 0H8L4 4Z" fill="#555"/></svg>
<div class="inp" style="left:1408px;top:980px;width:248px;height:29px;background:#3bab38;border-color:#2f8f2c"></div>
<div style="position:absolute;top:982.24px;font-family:'DejaVu Sans Condensed','DejaVu Sans','Liberation Sans',sans-serif;font-size:18.67px;line-height:24px;color:#4f5f4f;white-space:nowrap;font-weight:bold;letter-spacing:0.3px;left:1410.5px;">0.00</div>
<svg style="left:1639px;top:987px" width="7" height="4" viewBox="0 0 7 4"><path d="M0 4H7L3.5 0Z" fill="#6a7a6a"/></svg>
<svg style="left:1639px;top:999px" width="7" height="4" viewBox="0 0 7 4"><path d="M0 0H7L3.5 4Z" fill="#6a7a6a"/></svg>
<div style="position:absolute;top:981.24px;font-family:'DejaVu Sans Condensed','DejaVu Sans','Liberation Sans',sans-serif;font-size:18.67px;line-height:24px;color:#2e2e2e;white-space:nowrap;font-weight:bold;letter-spacing:0.3px;left:1665.5px;">-48.50</div>
<div class="btn" style="left:895px;background:#a6ee98"></div>
<div style="position:absolute;top:1029.42px;font-family:'DejaVu Sans Condensed','DejaVu Sans','Liberation Sans',sans-serif;font-size:21.33px;line-height:28px;color:#000;white-space:nowrap;font-weight:bold;letter-spacing:-0.22px;left:520px;width:1000px;text-align:center;">Kuuza</div>
<div class="btn" style="left:1151px;background:#ffffa6"></div>
<div style="position:absolute;top:1029.42px;font-family:'DejaVu Sans Condensed','DejaVu Sans','Liberation Sans',sans-serif;font-size:21.33px;line-height:28px;color:#000;white-space:nowrap;font-weight:bold;letter-spacing:-0.57px;left:776px;width:1000px;text-align:center;">Ahirisha</div>
<div class="btn" style="left:1407px;background:#ffdda0"></div>
<div style="position:absolute;top:1029.42px;font-family:'DejaVu Sans Condensed','DejaVu Sans','Liberation Sans',sans-serif;font-size:21.33px;line-height:28px;color:#000;white-space:nowrap;font-weight:bold;letter-spacing:-0.3px;left:1032px;width:1000px;text-align:center;">Hakuna malipo</div>
<div class="btn" style="left:1663px;background:#ffa0a0"></div>
<div style="position:absolute;top:1029.42px;font-family:'DejaVu Sans Condensed','DejaVu Sans','Liberation Sans',sans-serif;font-size:21.33px;line-height:28px;color:#000;white-space:nowrap;font-weight:bold;letter-spacing:-0.36px;left:1288px;width:1000px;text-align:center;">Ghairi</div>
</body></html>
